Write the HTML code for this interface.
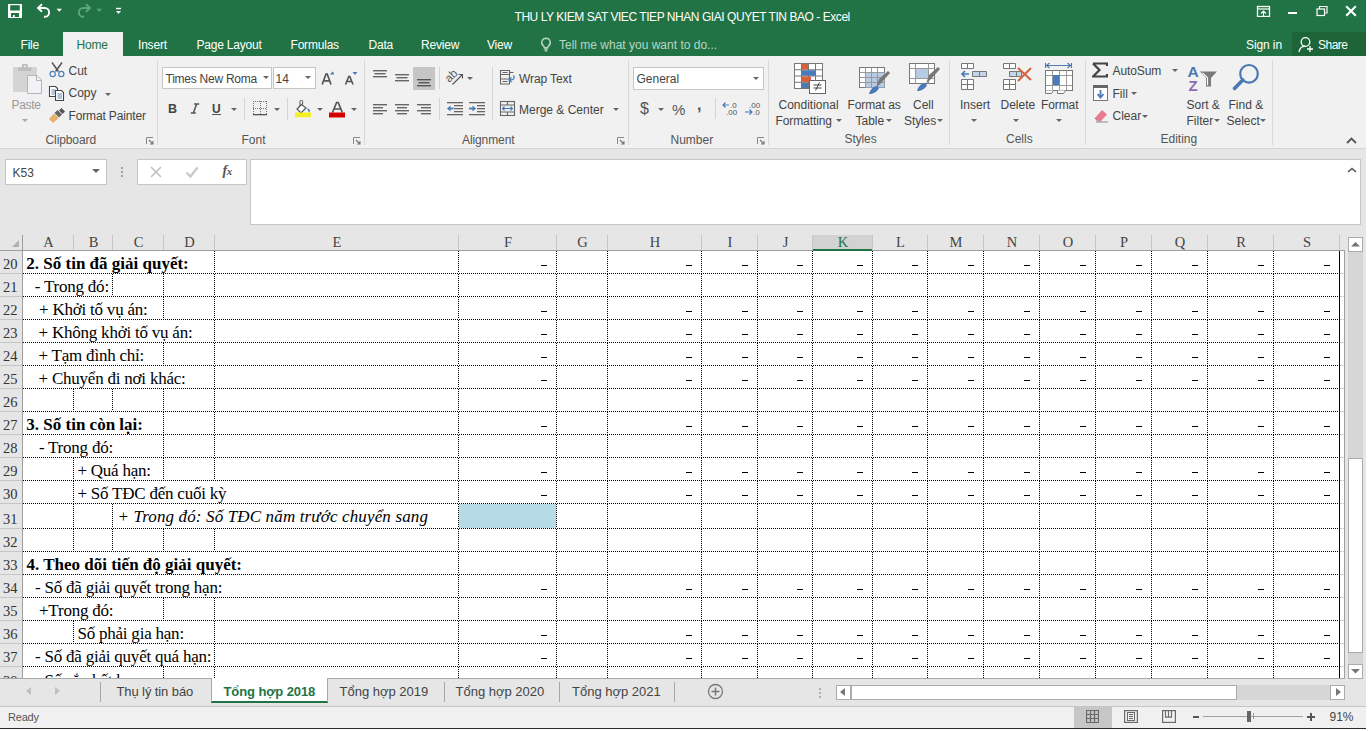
<!DOCTYPE html><html><head><meta charset="utf-8"><style>
html,body{margin:0;padding:0}
body{width:1371px;height:731px;position:relative;overflow:hidden;background:#fff}
body>div,body>svg{position:absolute}
.t{white-space:pre}
</style></head><body>
<div style="left:0px;top:0px;width:1366px;height:56px;background:#217346"></div>
<svg style="left:8px;top:4px;" width="14" height="14" viewBox="0 0 14 14"><rect x="0" y="0" width="14" height="14" fill="#fff"/><rect x="2.2" y="1.2" width="9.6" height="5.3" fill="#217346"/><rect x="3" y="9" width="8" height="4" fill="#217346"/><rect x="5" y="11" width="1.7" height="2" fill="#fff"/></svg>
<svg style="left:36px;top:3px;" width="16" height="15" viewBox="0 0 16 15"><path d="M2.5 5h6.2a4.4 4.4 0 0 1 0 8.8h-0.8" fill="none" stroke="#fff" stroke-width="1.9"/><path d="M6 1.2L2 5l4 3.8" fill="none" stroke="#fff" stroke-width="1.9"/></svg>
<svg style="left:56px;top:8px;" width="7" height="5" viewBox="0 0 7 5"><path d="M0.5 0.8h5.5l-2.75 3z" fill="#fff"/></svg>
<svg style="left:76px;top:3px;" width="16" height="15" viewBox="0 0 16 15"><path d="M13.5 5h-6.2a4.4 4.4 0 0 0 0 8.8h0.8" fill="none" stroke="#5ea67e" stroke-width="1.9"/><path d="M10 1.2L14 5l-4 3.8" fill="none" stroke="#5ea67e" stroke-width="1.9"/></svg>
<svg style="left:96px;top:8px;" width="7" height="5" viewBox="0 0 7 5"><path d="M0.5 0.8h5.5l-2.75 3z" fill="#5ea67e"/></svg>
<svg style="left:115px;top:7px;" width="8" height="8" viewBox="0 0 8 8"><rect x="1" y="0.8" width="5" height="1.4" fill="#fff"/><path d="M1 4h5l-2.5 3z" fill="#fff"/></svg>
<div class="t" style="left:514.5px;top:10.84px;font:normal normal 12px/1 'Liberation Sans', sans-serif;color:#fff;letter-spacing:-0.45px">THU LY KIEM SAT VIEC TIEP NHAN GIAI QUYET TIN BAO - Excel</div>
<svg style="left:1256px;top:5px;" width="15" height="12" viewBox="0 0 15 12"><rect x="1.5" y="1.5" width="12" height="10" fill="none" stroke="#fff" stroke-width="1.3"/><path d="M1.5 4h12" stroke="#fff" stroke-width="1.2"/><path d="M7.5 11.5v-5M5 8.5l2.5-2.5 2.5 2.5" fill="none" stroke="#fff" stroke-width="1.2"/></svg>
<div style="left:1288px;top:11.5px;width:9px;height:2.2px;background:#fff"></div>
<svg style="left:1316px;top:5px;" width="12" height="12" viewBox="0 0 12 12"><rect x="1" y="4" width="7.5" height="6.5" fill="none" stroke="#fff" stroke-width="1.2"/><path d="M3.5 4v-2.5h7.5v6.5h-2.5" fill="none" stroke="#fff" stroke-width="1.2"/></svg>
<svg style="left:1345px;top:5px;" width="12" height="12" viewBox="0 0 12 12"><path d="M1.2 1.2l9.6 9.6M10.8 1.2l-9.6 9.6" stroke="#fff" stroke-width="2.1"/></svg>
<div style="left:63px;top:32px;width:60px;height:24px;background:#f1f1f1"></div>
<div class="t" style="left:20.5px;top:38.84px;font:normal normal 12px/1 'Liberation Sans', sans-serif;color:#fff;letter-spacing:-0.2px">File</div>
<div class="t" style="left:76.5px;top:38.84px;font:normal normal 12px/1 'Liberation Sans', sans-serif;color:#217346;letter-spacing:-0.2px">Home</div>
<div class="t" style="left:138px;top:38.84px;font:normal normal 12px/1 'Liberation Sans', sans-serif;color:#fff;letter-spacing:-0.2px">Insert</div>
<div class="t" style="left:196.5px;top:38.84px;font:normal normal 12px/1 'Liberation Sans', sans-serif;color:#fff;letter-spacing:-0.2px">Page Layout</div>
<div class="t" style="left:290.5px;top:38.84px;font:normal normal 12px/1 'Liberation Sans', sans-serif;color:#fff;letter-spacing:-0.2px">Formulas</div>
<div class="t" style="left:368.5px;top:38.84px;font:normal normal 12px/1 'Liberation Sans', sans-serif;color:#fff;letter-spacing:-0.2px">Data</div>
<div class="t" style="left:421px;top:38.84px;font:normal normal 12px/1 'Liberation Sans', sans-serif;color:#fff;letter-spacing:-0.2px">Review</div>
<div class="t" style="left:487px;top:38.84px;font:normal normal 12px/1 'Liberation Sans', sans-serif;color:#fff;letter-spacing:-0.2px">View</div>
<svg style="left:540px;top:37px;" width="12" height="15" viewBox="0 0 12 15"><path d="M6 1.2a4.3 4.3 0 0 0-2.6 7.7c.6.5.9 1.1.9 1.8h3.4c0-.7.3-1.3.9-1.8A4.3 4.3 0 0 0 6 1.2z" fill="none" stroke="#b9d5c3" stroke-width="1.4"/><path d="M4.3 12h3.4M4.8 13.8h2.4" stroke="#b9d5c3" stroke-width="1.4"/></svg>
<div class="t" style="left:559px;top:38.84px;font:normal normal 12px/1 'Liberation Sans', sans-serif;color:#b9d5c3;letter-spacing:0px">Tell me what you want to do...</div>
<div class="t" style="left:1246px;top:38.84px;font:normal normal 12px/1 'Liberation Sans', sans-serif;color:#fff;letter-spacing:-0.1px">Sign in</div>
<div style="left:1292px;top:32px;width:74px;height:24px;background:#1d6538"></div>
<svg style="left:1298px;top:36px;" width="17" height="17" viewBox="0 0 17 17"><circle cx="7.5" cy="6" r="4.3" fill="none" stroke="#fff" stroke-width="1.3"/><path d="M1 16c.5-3.5 3-5.5 6-5.8" fill="none" stroke="#fff" stroke-width="1.3"/><path d="M12 10v6M9 13h6" stroke="#fff" stroke-width="1.3"/></svg>
<div class="t" style="left:1318px;top:38.84px;font:normal normal 12px/1 'Liberation Sans', sans-serif;color:#fff;letter-spacing:-0.5px">Share</div>
<div style="left:0px;top:56px;width:1366px;height:92px;background:#f1f1f1"></div>
<div style="left:0px;top:148px;width:1366px;height:1px;background:#d5d5d5"></div>
<svg style="left:12px;top:63px;" width="30" height="32" viewBox="0 0 30 32"><rect x="1" y="4" width="24" height="25" fill="#d4d4d4"/><rect x="6" y="4.5" width="13.5" height="3.5" fill="#bdbdbd"/><rect x="10" y="1" width="5.7" height="4" fill="#bdbdbd"/><circle cx="12.8" cy="3.3" r="1" fill="#eee"/><path d="M15.5 12.5h9.5l4.5 4.5v13.5h-14z" fill="#f3f1f6" stroke="#b4b4b4" stroke-width="1"/><path d="M24.5 12.5v5h5" fill="none" stroke="#b4b4b4"/></svg>
<div class="t" style="left:11.5px;top:99.34px;font:normal normal 12px/1 'Liberation Sans', sans-serif;color:#9a9a9a;letter-spacing:-0.3px">Paste</div>
<svg style="left:22px;top:119px;" width="6" height="4" viewBox="0 0 6 4"><path d="M0 0h6l-3 3z" fill="#aaa"/></svg>
<svg style="left:49px;top:62px;" width="16" height="16" viewBox="0 0 16 16"><path d="M3 .5l6.5 9M13 .5L6.5 9.5" stroke="#555" stroke-width="1.5"/><circle cx="3.7" cy="12" r="2.6" fill="none" stroke="#4a7ebb" stroke-width="1.2"/><circle cx="12.3" cy="12" r="2.6" fill="none" stroke="#4a7ebb" stroke-width="1.2"/></svg>
<div class="t" style="left:68.5px;top:64.84px;font:normal normal 12px/1 'Liberation Sans', sans-serif;color:#444;">Cut</div>
<svg style="left:48px;top:85px;" width="17" height="16" viewBox="0 0 17 16"><path d="M1.5 1.5h6l2 2v8h-8z" fill="#fff" stroke="#444" stroke-width="1.1"/><path d="M3.5 5h4M3.5 7h4M3.5 9h3" stroke="#4a7ebb" stroke-width=".9"/><path d="M7.5 5.5h6l2 2v8h-8z" fill="#fff" stroke="#444" stroke-width="1.1"/><path d="M9.5 9h4.5M9.5 11h4.5M9.5 13h4.5" stroke="#4a7ebb" stroke-width=".9"/></svg>
<div class="t" style="left:68.5px;top:87.34px;font:normal normal 12px/1 'Liberation Sans', sans-serif;color:#444;">Copy</div>
<svg style="left:105px;top:93px;" width="6" height="4" viewBox="0 0 6 4"><path d="M0 0h6l-3 3z" fill="#666"/></svg>
<svg style="left:48px;top:108px;" width="18" height="16" viewBox="0 0 18 16"><path d="M1 11l5-5.5 4.5 4.5-5.5 5z" fill="#e6b167"/><path d="M6.5 5l3-3 4.5 4.5-3 3z" fill="#666"/><path d="M11 2.5l2.5-2.5 3.5 3.5-2.5 2.5z" fill="#555"/></svg>
<div class="t" style="left:68.5px;top:110.34px;font:normal normal 12px/1 'Liberation Sans', sans-serif;color:#444;letter-spacing:-0.15px">Format Painter</div>
<div class="t" style="left:45.5px;top:133.84px;font:normal normal 12px/1 'Liberation Sans', sans-serif;color:#555;letter-spacing:-0.1px">Clipboard</div>
<svg style="left:146px;top:137px;" width="8" height="8" viewBox="0 0 8 8"><path d="M0.5 7V0.5H7" fill="none" stroke="#888" stroke-width="1"/><path d="M3 3l4 4M7 4v3H4" fill="none" stroke="#777" stroke-width="1.1"/></svg>
<div style="left:157px;top:60px;width:1px;height:85px;background:#d8d8d8"></div>
<div style="left:162px;top:67px;width:110px;height:22px;background:#fff;border:1px solid #c6c6c6;box-sizing:border-box"></div>
<div style="left:273px;top:67px;width:43px;height:22px;background:#fff;border:1px solid #c6c6c6;box-sizing:border-box"></div>
<div class="t" style="left:165.5px;top:72.84px;font:normal normal 12px/1 'Liberation Sans', sans-serif;color:#444;letter-spacing:-0.25px">Times New Roma</div>
<svg style="left:263px;top:76px;" width="6" height="4" viewBox="0 0 6 4"><path d="M0 0h6l-3 3z" fill="#666"/></svg>
<div class="t" style="left:275.5px;top:72.84px;font:normal normal 12px/1 'Liberation Sans', sans-serif;color:#444;">14</div>
<svg style="left:305px;top:76px;" width="6" height="4" viewBox="0 0 6 4"><path d="M0 0h6l-3 3z" fill="#666"/></svg>
<svg style="left:321px;top:71px;" width="13" height="14" viewBox="0 0 13 14"><path d="M1.2 13.5L5 3h1.2L10 13.5M2.6 9.8h5.8" fill="none" stroke="#555" stroke-width="1.7"/><path d="M9 3.5l2.5-3 2.5 3z" fill="#4a7ab8"/></svg>
<svg style="left:344px;top:71px;" width="13" height="14" viewBox="0 0 13 14"><path d="M1.5 13.5L4.8 5.5h1L9 13.5M2.8 10.5h4.8" fill="none" stroke="#555" stroke-width="1.6"/><path d="M8.5 1h5l-2.5 3z" fill="#4a7ab8"/></svg>
<div class="t" style="left:168px;top:102.92px;font:normal bold 12.5px/1 'Liberation Sans', sans-serif;color:#444;">B</div>
<svg style="left:190px;top:103px;" width="10" height="11" viewBox="0 0 10 11"><path d="M4.2 1h5M0.8 10h5M6.7 1L3.3 10" fill="none" stroke="#555" stroke-width="1.5"/></svg>
<div class="t" style="left:212px;top:102.84px;font:normal bold 12px/1 'Liberation Sans', sans-serif;color:#444;">U</div>
<div style="left:212px;top:114px;width:9px;height:1px;background:#555"></div>
<svg style="left:231px;top:108px;" width="6" height="4" viewBox="0 0 6 4"><path d="M0 0h6l-3 3z" fill="#666"/></svg>
<div style="left:244px;top:98px;width:1px;height:22px;background:#d4d4d4"></div>
<svg style="left:253px;top:101px;" width="14" height="15" viewBox="0 0 14 15"><path d="M0 .5h14M0 7.5h14M.5 0v14M7.5 0v14M13.5 0v14" stroke="#777" stroke-width="1" stroke-dasharray="1 1"/><rect x="0" y="13" width="14" height="1.3" fill="#555"/></svg>
<svg style="left:274px;top:108px;" width="6" height="4" viewBox="0 0 6 4"><path d="M0 0h6l-3 3z" fill="#666"/></svg>
<div style="left:287px;top:98px;width:1px;height:22px;background:#d4d4d4"></div>
<svg style="left:294px;top:100px;" width="19" height="18" viewBox="0 0 19 18"><path d="M7.5 4.5l-4.5 4.5 4 4 5-5z" fill="#fff" stroke="#555" stroke-width="1.2"/><path d="M6 6v-4.5a1.3 1.3 0 0 1 2.6 0v3" fill="none" stroke="#555" stroke-width="1"/><path d="M13 8.5c1.5-.2 3 .8 3 2.5l-1 1.5z" fill="#4a7ab8"/><rect x="1" y="12.5" width="16" height="4.7" fill="#f2ef22"/></svg>
<svg style="left:317px;top:108px;" width="6" height="4" viewBox="0 0 6 4"><path d="M0 0h6l-3 3z" fill="#666"/></svg>
<svg style="left:329px;top:101px;" width="17" height="17" viewBox="0 0 17 17"><path d="M3.5 11.5L7.6 1.5h1.6L13.3 11.5M5.2 8h6.4" fill="none" stroke="#555" stroke-width="1.7"/><rect x="0" y="11.5" width="16" height="5" fill="#d40000"/></svg>
<svg style="left:351px;top:108px;" width="6" height="4" viewBox="0 0 6 4"><path d="M0 0h6l-3 3z" fill="#666"/></svg>
<div class="t" style="left:241.5px;top:133.84px;font:normal normal 12px/1 'Liberation Sans', sans-serif;color:#555;">Font</div>
<svg style="left:353px;top:137px;" width="8" height="8" viewBox="0 0 8 8"><path d="M0.5 7V0.5H7" fill="none" stroke="#888" stroke-width="1"/><path d="M3 3l4 4M7 4v3H4" fill="none" stroke="#777" stroke-width="1.1"/></svg>
<div style="left:364px;top:60px;width:1px;height:85px;background:#d8d8d8"></div>
<svg style="left:373px;top:69px;" width="20" height="20" viewBox="0 0 20 20"><rect x="0" y="1" width="14" height="1.4" fill="#666"/><rect x="1.5" y="4" width="11" height="1.4" fill="#666"/><rect x="0" y="7" width="14" height="1.4" fill="#666"/></svg>
<svg style="left:395px;top:73px;" width="20" height="20" viewBox="0 0 20 20"><rect x="0" y="1" width="14" height="1.4" fill="#666"/><rect x="1.5" y="4" width="11" height="1.4" fill="#666"/><rect x="0" y="7" width="14" height="1.4" fill="#666"/></svg>
<div style="left:413px;top:67px;width:22px;height:23px;background:#c6c6c6"></div>
<svg style="left:417px;top:78px;" width="20" height="20" viewBox="0 0 20 20"><rect x="0" y="1" width="14" height="1.4" fill="#555"/><rect x="1.5" y="4" width="11" height="1.4" fill="#555"/><rect x="0" y="7" width="14" height="1.4" fill="#555"/></svg>
<div style="left:439px;top:67px;width:1px;height:22px;background:#d4d4d4"></div>
<svg style="left:446px;top:68px;" width="20" height="18" viewBox="0 0 20 18"><g transform="rotate(-45 6 8)"><text x="-1" y="11" font-family="Liberation Sans" font-size="11.5" fill="#555">ab</text></g><path d="M6.5 16.5L16 7" stroke="#555" stroke-width="1.1"/><path d="M12.5 6.5h4v4" fill="none" stroke="#555" stroke-width="1.1"/></svg>
<svg style="left:467px;top:77px;" width="6" height="4" viewBox="0 0 6 4"><path d="M0 0h6l-3 3z" fill="#666"/></svg>
<svg style="left:373px;top:103px;" width="20" height="20" viewBox="0 0 20 20"><rect x="0" y="1" width="14" height="1.4" fill="#666"/><rect x="0" y="4" width="10" height="1.4" fill="#666"/><rect x="0" y="7" width="14" height="1.4" fill="#666"/><rect x="0" y="10" width="10" height="1.4" fill="#666"/></svg>
<svg style="left:395px;top:103px;" width="20" height="20" viewBox="0 0 20 20"><rect x="0" y="1" width="14" height="1.4" fill="#666"/><rect x="2" y="4" width="10" height="1.4" fill="#666"/><rect x="0" y="7" width="14" height="1.4" fill="#666"/><rect x="2" y="10" width="10" height="1.4" fill="#666"/></svg>
<svg style="left:417px;top:103px;" width="20" height="20" viewBox="0 0 20 20"><rect x="0" y="1" width="14" height="1.4" fill="#666"/><rect x="4" y="4" width="10" height="1.4" fill="#666"/><rect x="0" y="7" width="14" height="1.4" fill="#666"/><rect x="4" y="10" width="10" height="1.4" fill="#666"/></svg>
<div style="left:439px;top:98px;width:1px;height:22px;background:#d4d4d4"></div>
<svg style="left:446px;top:101px;" width="17" height="15" viewBox="0 0 17 15"><rect x="1" y="1" width="16" height="1.3" fill="#666"/><rect x="8" y="4" width="9" height="1.3" fill="#666"/><rect x="8" y="7" width="9" height="1.3" fill="#666"/><rect x="8" y="10" width="9" height="1.3" fill="#666"/><rect x="1" y="13" width="16" height="1.3" fill="#666"/><path d="M1 7.5l3.5-3v6z" fill="#4a7ab8"/><rect x="3" y="6.6" width="4.5" height="1.8" fill="#4a7ab8"/></svg>
<svg style="left:468px;top:101px;" width="17" height="15" viewBox="0 0 17 15"><rect x="1" y="1" width="16" height="1.3" fill="#666"/><rect x="9" y="4" width="8" height="1.3" fill="#666"/><rect x="9" y="7" width="8" height="1.3" fill="#666"/><rect x="9" y="10" width="8" height="1.3" fill="#666"/><rect x="1" y="13" width="16" height="1.3" fill="#666"/><path d="M8 7.5l-3.5-3v6z" fill="#4a7ab8"/><rect x="1" y="6.6" width="4.5" height="1.8" fill="#4a7ab8"/></svg>
<div style="left:492px;top:67px;width:1px;height:53px;background:#d4d4d4"></div>
<svg style="left:499px;top:69px;" width="18" height="17" viewBox="0 0 18 17"><path d="M1.5 1.5h9v4h-9zM1.5 5.5h9v4.5h-9zM1.5 10h9v5h-9z" fill="none" stroke="#666" stroke-width="1.1"/><path d="M3.5 3.5h5M3.5 12.5h5" stroke="#666" stroke-width="1"/><path d="M10.5 3.5h4" stroke="#666" stroke-width="1.1"/><path d="M14.5 6.5c1.5 1.5.5 4.5-2.5 4.5h-1.5" fill="none" stroke="#4a7ab8" stroke-width="1.3"/><path d="M12.5 8.5l-2.5 2.5 2.5 2.3" fill="none" stroke="#4a7ab8" stroke-width="1.2"/></svg>
<div class="t" style="left:519px;top:73.34px;font:normal normal 12px/1 'Liberation Sans', sans-serif;color:#444;letter-spacing:-0.1px">Wrap Text</div>
<svg style="left:499px;top:100px;" width="17" height="17" viewBox="0 0 17 17"><rect x="1.5" y="1.5" width="14" height="14" fill="none" stroke="#666" stroke-width="1.1"/><path d="M1.5 5h14M1.5 12h14M8.5 1.5v3.5M8.5 12v3.5" stroke="#666" stroke-width="1.1"/><path d="M3.5 8.5h10" stroke="#4a7ab8" stroke-width="1.1"/><path d="M5.5 6.5l-2 2 2 2M11.5 6.5l2 2-2 2" fill="none" stroke="#4a7ab8" stroke-width="1.1"/></svg>
<div class="t" style="left:519px;top:103.84px;font:normal normal 12px/1 'Liberation Sans', sans-serif;color:#444;letter-spacing:0px">Merge &amp; Center</div>
<svg style="left:613px;top:108px;" width="6" height="4" viewBox="0 0 6 4"><path d="M0 0h6l-3 3z" fill="#666"/></svg>
<div class="t" style="left:462px;top:133.84px;font:normal normal 12px/1 'Liberation Sans', sans-serif;color:#555;letter-spacing:-0.1px">Alignment</div>
<svg style="left:617px;top:137px;" width="8" height="8" viewBox="0 0 8 8"><path d="M0.5 7V0.5H7" fill="none" stroke="#888" stroke-width="1"/><path d="M3 3l4 4M7 4v3H4" fill="none" stroke="#777" stroke-width="1.1"/></svg>
<div style="left:628px;top:60px;width:1px;height:85px;background:#d8d8d8"></div>
<div style="left:633px;top:67px;width:131px;height:23px;background:#fff;border:1px solid #c6c6c6;box-sizing:border-box"></div>
<div class="t" style="left:636.5px;top:72.84px;font:normal normal 12px/1 'Liberation Sans', sans-serif;color:#444;">General</div>
<svg style="left:753px;top:77px;" width="6" height="4" viewBox="0 0 6 4"><path d="M0 0h6l-3 3z" fill="#666"/></svg>
<div class="t" style="left:640px;top:101.46px;font:normal normal 16px/1 'Liberation Sans', sans-serif;color:#555;">$</div>
<svg style="left:658px;top:108px;" width="6" height="4" viewBox="0 0 6 4"><path d="M0 0h6l-3 3z" fill="#666"/></svg>
<div class="t" style="left:672px;top:102.30px;font:normal normal 15px/1 'Liberation Sans', sans-serif;color:#555;">%</div>
<div class="t" style="left:697px;top:97.46px;font:normal bold 16px/1 'Liberation Sans', sans-serif;color:#555;">,</div>
<div style="left:715px;top:98px;width:1px;height:21px;background:#d4d4d4"></div>
<svg style="left:722px;top:101px;" width="17" height="15" viewBox="0 0 17 15"><text x="8" y="7" font-family="Liberation Sans" font-size="8" fill="#555">.0</text><text x="4" y="14" font-family="Liberation Sans" font-size="8" fill="#555">.00</text><path d="M1 4h6M3.5 1.5L1 4l2.5 2.5" fill="none" stroke="#4a7ab8" stroke-width="1.2"/></svg>
<svg style="left:744px;top:101px;" width="17" height="15" viewBox="0 0 17 15"><text x="5" y="7" font-family="Liberation Sans" font-size="8" fill="#555">.00</text><text x="9" y="14" font-family="Liberation Sans" font-size="8" fill="#555">.0</text><path d="M1 11h7M5.5 8.5L8 11l-2.5 2.5" fill="none" stroke="#4a7ab8" stroke-width="1.2"/></svg>
<div class="t" style="left:670.5px;top:133.84px;font:normal normal 12px/1 'Liberation Sans', sans-serif;color:#555;">Number</div>
<svg style="left:757px;top:137px;" width="8" height="8" viewBox="0 0 8 8"><path d="M0.5 7V0.5H7" fill="none" stroke="#888" stroke-width="1"/><path d="M3 3l4 4M7 4v3H4" fill="none" stroke="#777" stroke-width="1.1"/></svg>
<div style="left:768px;top:60px;width:1px;height:85px;background:#d8d8d8"></div>
<svg style="left:794px;top:63px;" width="32" height="32" viewBox="0 0 32 32"><rect x=".5" y=".5" width="28" height="25" fill="#fff" stroke="#777"/><path d="M.5 6.75h28M.5 13h28M.5 19.25h28M7.5 .5v25M14.5 .5v25M21.5 .5v25" stroke="#777" stroke-width="1"/><rect x="8" y="1" width="6" height="5.5" fill="#d8603a"/><rect x="8" y="7.25" width="13" height="5.5" fill="#4a7ab8"/><rect x="8" y="13.5" width="9" height="5.5" fill="#d8603a"/><rect x="8" y="19.75" width="6" height="5.5" fill="#4a7ab8"/><rect x="15.5" y="17.5" width="16" height="13" fill="#fff" stroke="#666"/><path d="M19.5 22h8M19.5 25h8M25.5 19.5l-4 8" stroke="#444" stroke-width="1"/></svg>
<div class="t" style="left:778.5px;top:99.34px;font:normal normal 12px/1 'Liberation Sans', sans-serif;color:#444;">Conditional</div>
<div class="t" style="left:775.5px;top:115.14px;font:normal normal 12px/1 'Liberation Sans', sans-serif;color:#444;letter-spacing:-0.1px">Formatting</div>
<svg style="left:836px;top:119px;" width="6" height="4" viewBox="0 0 6 4"><path d="M0 0h6l-3 3z" fill="#666"/></svg>
<svg style="left:859px;top:65px;" width="32" height="30" viewBox="0 0 32 30"><rect x=".5" y="2.5" width="25" height="20" fill="#fff" stroke="#777"/><rect x="6.5" y="7.5" width="19" height="15" fill="#b7cce4"/><path d="M.5 7.5h25M.5 12.5h25M.5 17.5h25M6.5 2.5v20M12.5 2.5v20M18.5 2.5v20" stroke="#999" stroke-width="1"/><path d="M17 23l6-6 8-9-2-2-9 8z" fill="#777"/><path d="M10 29c1-4 4-8 8-8l2 2c-2 4-6 6-10 6z" fill="#4a7ab8"/></svg>
<div class="t" style="left:847.5px;top:99.34px;font:normal normal 12px/1 'Liberation Sans', sans-serif;color:#444;letter-spacing:-0.1px">Format as</div>
<div class="t" style="left:855.5px;top:115.14px;font:normal normal 12px/1 'Liberation Sans', sans-serif;color:#444;">Table</div>
<svg style="left:886px;top:119px;" width="6" height="4" viewBox="0 0 6 4"><path d="M0 0h6l-3 3z" fill="#666"/></svg>
<svg style="left:909px;top:63px;" width="32" height="30" viewBox="0 0 32 30"><rect x=".5" y=".5" width="25" height="20" fill="#fff" stroke="#777"/><rect x="6.5" y="5.5" width="13" height="10" fill="#b7cce4"/><path d="M.5 5.5h25M.5 15.5h25M6.5 .5v20M19.5 .5v20" stroke="#999" stroke-width="1"/><path d="M17 21l6-6 8-9-2-2-9 8z" fill="#777"/><path d="M8 28c1-4 4-8 8-8l2 2c-2 4-6 6-10 6z" fill="#4a7ab8"/></svg>
<div class="t" style="left:913px;top:99.34px;font:normal normal 12px/1 'Liberation Sans', sans-serif;color:#444;">Cell</div>
<div class="t" style="left:904px;top:115.14px;font:normal normal 12px/1 'Liberation Sans', sans-serif;color:#444;letter-spacing:-0.1px">Styles</div>
<svg style="left:937px;top:119px;" width="6" height="4" viewBox="0 0 6 4"><path d="M0 0h6l-3 3z" fill="#666"/></svg>
<div class="t" style="left:844.5px;top:133.34px;font:normal normal 12px/1 'Liberation Sans', sans-serif;color:#555;letter-spacing:-0.1px">Styles</div>
<div style="left:949px;top:60px;width:1px;height:85px;background:#d8d8d8"></div>
<svg style="left:961px;top:63px;" width="28" height="29" viewBox="0 0 28 29"><path d="M.5 .5h6v5h-6zM6.5 .5h6v5h-6z" fill="#fff" stroke="#777"/><path d="M11.5 8.5h7v5h-7zM18.5 8.5h7v5h-7z" fill="#c5d6ea" stroke="#777"/><path d="M1 11h7M4 8l-3 3 3 3" fill="none" stroke="#4a7ab8" stroke-width="1.6"/><path d="M.5 16.5h6v5h-6zM6.5 16.5h6v5h-6zM.5 21.5h6v5h-6zM6.5 21.5h6v5h-6z" fill="#fff" stroke="#777"/></svg>
<div class="t" style="left:960px;top:99.34px;font:normal normal 12px/1 'Liberation Sans', sans-serif;color:#444;">Insert</div>
<svg style="left:971px;top:119px;" width="6" height="4" viewBox="0 0 6 4"><path d="M0 0h6l-3 3z" fill="#666"/></svg>
<svg style="left:1003px;top:63px;" width="30" height="29" viewBox="0 0 30 29"><path d="M.5 .5h6v5h-6zM6.5 .5h6v5h-6z" fill="#fff" stroke="#777"/><path d="M6.5 8.5h7v5h-7zM13.5 8.5h5v5h-5z" fill="#c5d6ea" stroke="#777"/><path d="M.5 16.5h6v5h-6zM6.5 16.5h6v5h-6zM.5 21.5h6v5h-6zM6.5 21.5h6v5h-6z" fill="#fff" stroke="#777"/><path d="M15 5l13 12M28 5l-13 13" stroke="#d8603a" stroke-width="2"/></svg>
<div class="t" style="left:1000.5px;top:99.34px;font:normal normal 12px/1 'Liberation Sans', sans-serif;color:#444;">Delete</div>
<svg style="left:1013px;top:119px;" width="6" height="4" viewBox="0 0 6 4"><path d="M0 0h6l-3 3z" fill="#666"/></svg>
<svg style="left:1044px;top:62px;" width="30" height="32" viewBox="0 0 30 32"><path d="M1.5 1v5M27.5 1v5M2.5 3.5h24M5.5 1l-3 2.5 3 2.5M23.5 1l3 2.5-3 2.5" fill="none" stroke="#4a7ab8" stroke-width="1.1"/><rect x="1.5" y="8.5" width="27" height="20" fill="#fff" stroke="#777"/><path d="M1.5 13.5h27M1.5 23.5h27M8.5 8.5v20M15.5 8.5v20M22.5 8.5v20" stroke="#999"/><rect x="9" y="13" width="6.5" height="10" fill="#4a7ab8"/><path d="M1.5 28.5v3h6l2-3h4v3h6l2-3" fill="#fff" stroke="#777"/></svg>
<div class="t" style="left:1041px;top:99.34px;font:normal normal 12px/1 'Liberation Sans', sans-serif;color:#444;letter-spacing:-0.1px">Format</div>
<svg style="left:1056px;top:119px;" width="6" height="4" viewBox="0 0 6 4"><path d="M0 0h6l-3 3z" fill="#666"/></svg>
<div class="t" style="left:1006px;top:133.34px;font:normal normal 12px/1 'Liberation Sans', sans-serif;color:#555;">Cells</div>
<div style="left:1085px;top:60px;width:1px;height:85px;background:#d8d8d8"></div>
<svg style="left:1092px;top:62px;" width="16" height="16" viewBox="0 0 16 16"><path d="M1 1.5h14v2.5M1 1.5l6.5 6.5L1 14.5h14v-2.5" fill="none" stroke="#444" stroke-width="2.2"/></svg>
<div class="t" style="left:1112.5px;top:64.84px;font:normal normal 12px/1 'Liberation Sans', sans-serif;color:#444;letter-spacing:-0.1px">AutoSum</div>
<svg style="left:1172px;top:69px;" width="6" height="4" viewBox="0 0 6 4"><path d="M0 0h6l-3 3z" fill="#666"/></svg>
<svg style="left:1093px;top:85px;" width="16" height="16" viewBox="0 0 16 16"><rect x=".5" y=".5" width="14" height="15" fill="#fff" stroke="#777"/><rect x="0" y="0" width="15" height="3" fill="#666"/><path d="M7.5 5v7M4.5 9l3 3.5 3-3.5" fill="none" stroke="#4a7ab8" stroke-width="1.8"/></svg>
<div class="t" style="left:1112.5px;top:87.84px;font:normal normal 12px/1 'Liberation Sans', sans-serif;color:#444;">Fill</div>
<svg style="left:1131px;top:92px;" width="6" height="4" viewBox="0 0 6 4"><path d="M0 0h6l-3 3z" fill="#666"/></svg>
<svg style="left:1093px;top:108px;" width="16" height="15" viewBox="0 0 16 15"><path d="M2 10l7-8 5 4.5-7 7.5z" fill="#e77b92"/><path d="M2 10l3 3.5" stroke="#c05070" stroke-width="1"/><path d="M3 14h12" stroke="#888" stroke-width="1"/></svg>
<div class="t" style="left:1112.5px;top:110.34px;font:normal normal 12px/1 'Liberation Sans', sans-serif;color:#444;">Clear</div>
<svg style="left:1142px;top:115px;" width="6" height="4" viewBox="0 0 6 4"><path d="M0 0h6l-3 3z" fill="#666"/></svg>
<svg style="left:1186px;top:63px;" width="34" height="30" viewBox="0 0 34 30"><text x="1.5" y="13.5" font-family="Liberation Sans" font-weight="bold" font-size="15.5" fill="#4a78b0">A</text><text x="2.5" y="28" font-family="Liberation Sans" font-weight="bold" font-size="15" fill="#8e6bb5">Z</text><path d="M14 8.5h17l-6 6.5v8.5h-5v-8.5z" fill="#7a7a7a"/><path d="M16.5 9.8l5 5v7.5" fill="none" stroke="#fff" stroke-width="1.2"/></svg>
<div class="t" style="left:1186.5px;top:99.34px;font:normal normal 12px/1 'Liberation Sans', sans-serif;color:#444;">Sort &amp;</div>
<div class="t" style="left:1186.5px;top:115.14px;font:normal normal 12px/1 'Liberation Sans', sans-serif;color:#444;">Filter</div>
<svg style="left:1214px;top:119px;" width="6" height="4" viewBox="0 0 6 4"><path d="M0 0h6l-3 3z" fill="#666"/></svg>
<svg style="left:1230px;top:63px;" width="31" height="29" viewBox="0 0 31 29"><circle cx="19" cy="10.8" r="8.8" fill="none" stroke="#4a78b0" stroke-width="2.2"/><path d="M12.8 17L4.5 25.5" stroke="#4a78b0" stroke-width="3.6" stroke-linecap="round"/></svg>
<div class="t" style="left:1228.5px;top:99.34px;font:normal normal 12px/1 'Liberation Sans', sans-serif;color:#444;">Find &amp;</div>
<div class="t" style="left:1226.5px;top:115.14px;font:normal normal 12px/1 'Liberation Sans', sans-serif;color:#444;">Select</div>
<svg style="left:1260px;top:119px;" width="6" height="4" viewBox="0 0 6 4"><path d="M0 0h6l-3 3z" fill="#666"/></svg>
<div class="t" style="left:1160.5px;top:133.34px;font:normal normal 12px/1 'Liberation Sans', sans-serif;color:#555;">Editing</div>
<div style="left:1272px;top:60px;width:1px;height:85px;background:#d8d8d8"></div>
<svg style="left:1346px;top:137px;" width="11" height="7" viewBox="0 0 11 7"><path d="M1 6l4.5-4.5L10 6" fill="none" stroke="#555" stroke-width="1.8"/></svg>
<div style="left:0px;top:149px;width:1366px;height:86px;background:#e6e6e6"></div>
<div style="left:5px;top:159px;width:102px;height:26px;background:#fff;border:1px solid #c6c6c6;box-sizing:border-box"></div>
<div class="t" style="left:12.5px;top:166.84px;font:normal normal 12px/1 'Liberation Sans', sans-serif;color:#444;">K53</div>
<svg style="left:92px;top:169px;" width="8" height="5" viewBox="0 0 8 5"><path d="M0 0h8l-4 4z" fill="#666"/></svg>
<div style="left:121px;top:167px;width:2px;height:2px;background:#a0a0a0"></div>
<div style="left:121px;top:171px;width:2px;height:2px;background:#a0a0a0"></div>
<div style="left:121px;top:175px;width:2px;height:2px;background:#a0a0a0"></div>
<div style="left:137px;top:159px;width:110px;height:26px;background:#fff;border:1px solid #c6c6c6;box-sizing:border-box"></div>
<svg style="left:150px;top:166px;" width="12" height="12" viewBox="0 0 12 12"><path d="M1 1l10 10M11 1L1 11" stroke="#c2c2c2" stroke-width="1.7"/></svg>
<svg style="left:185px;top:166px;" width="14" height="12" viewBox="0 0 14 12"><path d="M1.5 6.5l4 4L12.5 1.5" fill="none" stroke="#c8c8c8" stroke-width="2.3"/></svg>
<div class="t" style="left:222.5px;top:163.78px;font:italic bold 14px/1 'Liberation Serif', serif;color:#555;letter-spacing:-0.5px">f<span style="font-size:11px">x</span></div>
<div style="left:250px;top:159px;width:1111px;height:66px;background:#fff;border:1px solid #c6c6c6;box-sizing:border-box"></div>
<svg style="left:1347px;top:167px;" width="10" height="6" viewBox="0 0 10 6"><path d="M1 5l4-3.5L9 5" fill="none" stroke="#555" stroke-width="1.6"/></svg>
<div style="left:0px;top:235px;width:1345px;height:15px;background:#e6e6e6"></div>
<div style="left:0px;top:250px;width:22px;height:428px;background:#e6e6e6"></div>
<svg style="left:12px;top:240px;" width="8" height="8" viewBox="0 0 8 8"><path d="M7 0v7H0z" fill="#b0b0b0"/></svg>
<div style="left:22px;top:235px;width:1px;height:443px;background:#9e9e9e"></div>
<div style="left:0px;top:250px;width:1345px;height:1px;background:#9e9e9e"></div>
<div style="left:813px;top:235px;width:59px;height:15px;background:#d2d2d2"></div>
<div style="left:813px;top:249px;width:59px;height:2px;background:#217346"></div>
<div style="left:73px;top:235px;width:1px;height:15px;background:#c6c6c6"></div>
<div class="t" style="left:-251.5px;width:600px;text-align:center;top:234.86px;font:normal normal 14.5px/1 'Liberation Serif', serif;color:#444;">A</div>
<div style="left:112px;top:235px;width:1px;height:15px;background:#c6c6c6"></div>
<div class="t" style="left:-206.5px;width:600px;text-align:center;top:234.86px;font:normal normal 14.5px/1 'Liberation Serif', serif;color:#444;">B</div>
<div style="left:163px;top:235px;width:1px;height:15px;background:#c6c6c6"></div>
<div class="t" style="left:-161.5px;width:600px;text-align:center;top:234.86px;font:normal normal 14.5px/1 'Liberation Serif', serif;color:#444;">C</div>
<div style="left:214px;top:235px;width:1px;height:15px;background:#c6c6c6"></div>
<div class="t" style="left:-110.5px;width:600px;text-align:center;top:234.86px;font:normal normal 14.5px/1 'Liberation Serif', serif;color:#444;">D</div>
<div style="left:458px;top:235px;width:1px;height:15px;background:#c6c6c6"></div>
<div class="t" style="left:37.0px;width:600px;text-align:center;top:234.86px;font:normal normal 14.5px/1 'Liberation Serif', serif;color:#444;">E</div>
<div style="left:556px;top:235px;width:1px;height:15px;background:#c6c6c6"></div>
<div class="t" style="left:208.0px;width:600px;text-align:center;top:234.86px;font:normal normal 14.5px/1 'Liberation Serif', serif;color:#444;">F</div>
<div style="left:607px;top:235px;width:1px;height:15px;background:#c6c6c6"></div>
<div class="t" style="left:282.5px;width:600px;text-align:center;top:234.86px;font:normal normal 14.5px/1 'Liberation Serif', serif;color:#444;">G</div>
<div style="left:701px;top:235px;width:1px;height:15px;background:#c6c6c6"></div>
<div class="t" style="left:355.0px;width:600px;text-align:center;top:234.86px;font:normal normal 14.5px/1 'Liberation Serif', serif;color:#444;">H</div>
<div style="left:757px;top:235px;width:1px;height:15px;background:#c6c6c6"></div>
<div class="t" style="left:430.0px;width:600px;text-align:center;top:234.86px;font:normal normal 14.5px/1 'Liberation Serif', serif;color:#444;">I</div>
<div style="left:812px;top:235px;width:1px;height:15px;background:#c6c6c6"></div>
<div class="t" style="left:485.5px;width:600px;text-align:center;top:234.86px;font:normal normal 14.5px/1 'Liberation Serif', serif;color:#444;">J</div>
<div style="left:872px;top:235px;width:1px;height:15px;background:#c6c6c6"></div>
<div class="t" style="left:543.0px;width:600px;text-align:center;top:234.86px;font:normal normal 14.5px/1 'Liberation Serif', serif;color:#217346;">K</div>
<div style="left:927px;top:235px;width:1px;height:15px;background:#c6c6c6"></div>
<div class="t" style="left:600.5px;width:600px;text-align:center;top:234.86px;font:normal normal 14.5px/1 'Liberation Serif', serif;color:#444;">L</div>
<div style="left:983px;top:235px;width:1px;height:15px;background:#c6c6c6"></div>
<div class="t" style="left:656.0px;width:600px;text-align:center;top:234.86px;font:normal normal 14.5px/1 'Liberation Serif', serif;color:#444;">M</div>
<div style="left:1039px;top:235px;width:1px;height:15px;background:#c6c6c6"></div>
<div class="t" style="left:712.0px;width:600px;text-align:center;top:234.86px;font:normal normal 14.5px/1 'Liberation Serif', serif;color:#444;">N</div>
<div style="left:1095px;top:235px;width:1px;height:15px;background:#c6c6c6"></div>
<div class="t" style="left:768.0px;width:600px;text-align:center;top:234.86px;font:normal normal 14.5px/1 'Liberation Serif', serif;color:#444;">O</div>
<div style="left:1151px;top:235px;width:1px;height:15px;background:#c6c6c6"></div>
<div class="t" style="left:824.0px;width:600px;text-align:center;top:234.86px;font:normal normal 14.5px/1 'Liberation Serif', serif;color:#444;">P</div>
<div style="left:1207px;top:235px;width:1px;height:15px;background:#c6c6c6"></div>
<div class="t" style="left:880.0px;width:600px;text-align:center;top:234.86px;font:normal normal 14.5px/1 'Liberation Serif', serif;color:#444;">Q</div>
<div style="left:1273px;top:235px;width:1px;height:15px;background:#c6c6c6"></div>
<div class="t" style="left:941.0px;width:600px;text-align:center;top:234.86px;font:normal normal 14.5px/1 'Liberation Serif', serif;color:#444;">R</div>
<div style="left:1339px;top:235px;width:1px;height:15px;background:#c6c6c6"></div>
<div class="t" style="left:1007.0px;width:600px;text-align:center;top:234.86px;font:normal normal 14.5px/1 'Liberation Serif', serif;color:#444;">S</div>
<div style="left:23px;top:251px;width:1322px;height:427px;background:#fff"></div>
<div style="left:0px;top:273px;width:22px;height:1px;background:#c6c6c6"></div>
<div class="t" style="right:1353.5px;top:256.86px;font:normal normal 14.5px/1 'Liberation Serif', serif;color:#333;">20</div>
<div style="left:0px;top:296px;width:22px;height:1px;background:#c6c6c6"></div>
<div class="t" style="right:1353.5px;top:279.86px;font:normal normal 14.5px/1 'Liberation Serif', serif;color:#333;">21</div>
<div style="left:0px;top:319px;width:22px;height:1px;background:#c6c6c6"></div>
<div class="t" style="right:1353.5px;top:302.86px;font:normal normal 14.5px/1 'Liberation Serif', serif;color:#333;">22</div>
<div style="left:0px;top:342px;width:22px;height:1px;background:#c6c6c6"></div>
<div class="t" style="right:1353.5px;top:325.86px;font:normal normal 14.5px/1 'Liberation Serif', serif;color:#333;">23</div>
<div style="left:0px;top:365px;width:22px;height:1px;background:#c6c6c6"></div>
<div class="t" style="right:1353.5px;top:348.86px;font:normal normal 14.5px/1 'Liberation Serif', serif;color:#333;">24</div>
<div style="left:0px;top:388px;width:22px;height:1px;background:#c6c6c6"></div>
<div class="t" style="right:1353.5px;top:371.86px;font:normal normal 14.5px/1 'Liberation Serif', serif;color:#333;">25</div>
<div style="left:0px;top:411px;width:22px;height:1px;background:#c6c6c6"></div>
<div class="t" style="right:1353.5px;top:394.86px;font:normal normal 14.5px/1 'Liberation Serif', serif;color:#333;">26</div>
<div style="left:0px;top:434px;width:22px;height:1px;background:#c6c6c6"></div>
<div class="t" style="right:1353.5px;top:417.86px;font:normal normal 14.5px/1 'Liberation Serif', serif;color:#333;">27</div>
<div style="left:0px;top:457px;width:22px;height:1px;background:#c6c6c6"></div>
<div class="t" style="right:1353.5px;top:440.86px;font:normal normal 14.5px/1 'Liberation Serif', serif;color:#333;">28</div>
<div style="left:0px;top:480px;width:22px;height:1px;background:#c6c6c6"></div>
<div class="t" style="right:1353.5px;top:463.86px;font:normal normal 14.5px/1 'Liberation Serif', serif;color:#333;">29</div>
<div style="left:0px;top:503px;width:22px;height:1px;background:#c6c6c6"></div>
<div class="t" style="right:1353.5px;top:486.86px;font:normal normal 14.5px/1 'Liberation Serif', serif;color:#333;">30</div>
<div style="left:0px;top:528px;width:22px;height:1px;background:#c6c6c6"></div>
<div class="t" style="right:1353.5px;top:511.86px;font:normal normal 14.5px/1 'Liberation Serif', serif;color:#333;">31</div>
<div style="left:0px;top:551px;width:22px;height:1px;background:#c6c6c6"></div>
<div class="t" style="right:1353.5px;top:534.86px;font:normal normal 14.5px/1 'Liberation Serif', serif;color:#333;">32</div>
<div style="left:0px;top:574px;width:22px;height:1px;background:#c6c6c6"></div>
<div class="t" style="right:1353.5px;top:557.86px;font:normal normal 14.5px/1 'Liberation Serif', serif;color:#333;">33</div>
<div style="left:0px;top:597px;width:22px;height:1px;background:#c6c6c6"></div>
<div class="t" style="right:1353.5px;top:580.86px;font:normal normal 14.5px/1 'Liberation Serif', serif;color:#333;">34</div>
<div style="left:0px;top:620px;width:22px;height:1px;background:#c6c6c6"></div>
<div class="t" style="right:1353.5px;top:603.86px;font:normal normal 14.5px/1 'Liberation Serif', serif;color:#333;">35</div>
<div style="left:0px;top:643px;width:22px;height:1px;background:#c6c6c6"></div>
<div class="t" style="right:1353.5px;top:626.86px;font:normal normal 14.5px/1 'Liberation Serif', serif;color:#333;">36</div>
<div style="left:0px;top:666px;width:22px;height:1px;background:#c6c6c6"></div>
<div class="t" style="right:1353.5px;top:649.86px;font:normal normal 14.5px/1 'Liberation Serif', serif;color:#333;">37</div>
<div class="t" style="right:1353.5px;top:673.86px;font:normal normal 14.5px/1 'Liberation Serif', serif;color:#333;">38</div>
<div style="left:1344px;top:250px;width:1px;height:428px;background:#a0a0a0"></div>
<div style="left:0px;top:678px;width:1345px;height:1px;background:#a8a8a8"></div>
<div style="left:459px;top:504px;width:97px;height:24px;background:#b7dbe6"></div>
<div style="left:23px;top:273px;width:1316px;height:1px;background:repeating-linear-gradient(to right,#000 0 1px,transparent 1px 2px)"></div>
<div style="left:1340px;top:273px;width:4px;height:1px;background:#d4d4d4"></div>
<div style="left:214px;top:251px;width:1px;height:22px;background:repeating-linear-gradient(to bottom,#000 0 1px,transparent 1px 2px)"></div>
<div style="left:458px;top:251px;width:1px;height:22px;background:repeating-linear-gradient(to bottom,#000 0 1px,transparent 1px 2px)"></div>
<div style="left:556px;top:251px;width:1px;height:22px;background:repeating-linear-gradient(to bottom,#000 0 1px,transparent 1px 2px)"></div>
<div style="left:607px;top:251px;width:1px;height:22px;background:repeating-linear-gradient(to bottom,#000 0 1px,transparent 1px 2px)"></div>
<div style="left:701px;top:251px;width:1px;height:22px;background:repeating-linear-gradient(to bottom,#000 0 1px,transparent 1px 2px)"></div>
<div style="left:757px;top:251px;width:1px;height:22px;background:repeating-linear-gradient(to bottom,#000 0 1px,transparent 1px 2px)"></div>
<div style="left:812px;top:251px;width:1px;height:22px;background:repeating-linear-gradient(to bottom,#000 0 1px,transparent 1px 2px)"></div>
<div style="left:872px;top:251px;width:1px;height:22px;background:repeating-linear-gradient(to bottom,#000 0 1px,transparent 1px 2px)"></div>
<div style="left:927px;top:251px;width:1px;height:22px;background:repeating-linear-gradient(to bottom,#000 0 1px,transparent 1px 2px)"></div>
<div style="left:983px;top:251px;width:1px;height:22px;background:repeating-linear-gradient(to bottom,#000 0 1px,transparent 1px 2px)"></div>
<div style="left:1039px;top:251px;width:1px;height:22px;background:repeating-linear-gradient(to bottom,#000 0 1px,transparent 1px 2px)"></div>
<div style="left:1095px;top:251px;width:1px;height:22px;background:repeating-linear-gradient(to bottom,#000 0 1px,transparent 1px 2px)"></div>
<div style="left:1151px;top:251px;width:1px;height:22px;background:repeating-linear-gradient(to bottom,#000 0 1px,transparent 1px 2px)"></div>
<div style="left:1207px;top:251px;width:1px;height:22px;background:repeating-linear-gradient(to bottom,#000 0 1px,transparent 1px 2px)"></div>
<div style="left:1273px;top:251px;width:1px;height:22px;background:repeating-linear-gradient(to bottom,#000 0 1px,transparent 1px 2px)"></div>
<div class="t" style="left:26.3px;top:254.76px;font:normal bold 17px/1 'Liberation Serif', serif;color:#000;">2. Số tin đã giải quyết:</div>
<div style="left:541px;top:265px;width:6px;height:1px;background:#000"></div>
<div style="left:686px;top:265px;width:6px;height:1px;background:#000"></div>
<div style="left:742px;top:265px;width:6px;height:1px;background:#000"></div>
<div style="left:797px;top:265px;width:6px;height:1px;background:#000"></div>
<div style="left:857px;top:265px;width:6px;height:1px;background:#000"></div>
<div style="left:912px;top:265px;width:6px;height:1px;background:#000"></div>
<div style="left:968px;top:265px;width:6px;height:1px;background:#000"></div>
<div style="left:1024px;top:265px;width:6px;height:1px;background:#000"></div>
<div style="left:1080px;top:265px;width:6px;height:1px;background:#000"></div>
<div style="left:1136px;top:265px;width:6px;height:1px;background:#000"></div>
<div style="left:1192px;top:265px;width:6px;height:1px;background:#000"></div>
<div style="left:1258px;top:265px;width:6px;height:1px;background:#000"></div>
<div style="left:1324px;top:265px;width:6px;height:1px;background:#000"></div>
<div style="left:23px;top:296px;width:1316px;height:1px;background:repeating-linear-gradient(to right,#000 0 1px,transparent 1px 2px)"></div>
<div style="left:1340px;top:296px;width:4px;height:1px;background:#d4d4d4"></div>
<div style="left:112px;top:274px;width:1px;height:22px;background:repeating-linear-gradient(to bottom,#000 0 1px,transparent 1px 2px)"></div>
<div style="left:163px;top:274px;width:1px;height:22px;background:repeating-linear-gradient(to bottom,#000 0 1px,transparent 1px 2px)"></div>
<div style="left:214px;top:274px;width:1px;height:22px;background:repeating-linear-gradient(to bottom,#000 0 1px,transparent 1px 2px)"></div>
<div style="left:458px;top:274px;width:1px;height:22px;background:repeating-linear-gradient(to bottom,#000 0 1px,transparent 1px 2px)"></div>
<div style="left:556px;top:274px;width:1px;height:22px;background:repeating-linear-gradient(to bottom,#000 0 1px,transparent 1px 2px)"></div>
<div style="left:607px;top:274px;width:1px;height:22px;background:repeating-linear-gradient(to bottom,#000 0 1px,transparent 1px 2px)"></div>
<div style="left:701px;top:274px;width:1px;height:22px;background:repeating-linear-gradient(to bottom,#000 0 1px,transparent 1px 2px)"></div>
<div style="left:757px;top:274px;width:1px;height:22px;background:repeating-linear-gradient(to bottom,#000 0 1px,transparent 1px 2px)"></div>
<div style="left:812px;top:274px;width:1px;height:22px;background:repeating-linear-gradient(to bottom,#000 0 1px,transparent 1px 2px)"></div>
<div style="left:872px;top:274px;width:1px;height:22px;background:repeating-linear-gradient(to bottom,#000 0 1px,transparent 1px 2px)"></div>
<div style="left:927px;top:274px;width:1px;height:22px;background:repeating-linear-gradient(to bottom,#000 0 1px,transparent 1px 2px)"></div>
<div style="left:983px;top:274px;width:1px;height:22px;background:repeating-linear-gradient(to bottom,#000 0 1px,transparent 1px 2px)"></div>
<div style="left:1039px;top:274px;width:1px;height:22px;background:repeating-linear-gradient(to bottom,#000 0 1px,transparent 1px 2px)"></div>
<div style="left:1095px;top:274px;width:1px;height:22px;background:repeating-linear-gradient(to bottom,#000 0 1px,transparent 1px 2px)"></div>
<div style="left:1151px;top:274px;width:1px;height:22px;background:repeating-linear-gradient(to bottom,#000 0 1px,transparent 1px 2px)"></div>
<div style="left:1207px;top:274px;width:1px;height:22px;background:repeating-linear-gradient(to bottom,#000 0 1px,transparent 1px 2px)"></div>
<div style="left:1273px;top:274px;width:1px;height:22px;background:repeating-linear-gradient(to bottom,#000 0 1px,transparent 1px 2px)"></div>
<div class="t" style="left:34.8px;top:277.76px;font:normal normal 17px/1 'Liberation Serif', serif;color:#000;letter-spacing:-0.22px">- Trong đó:</div>
<div style="left:23px;top:319px;width:1316px;height:1px;background:repeating-linear-gradient(to right,#000 0 1px,transparent 1px 2px)"></div>
<div style="left:1340px;top:319px;width:4px;height:1px;background:#d4d4d4"></div>
<div style="left:163px;top:297px;width:1px;height:22px;background:repeating-linear-gradient(to bottom,#000 0 1px,transparent 1px 2px)"></div>
<div style="left:214px;top:297px;width:1px;height:22px;background:repeating-linear-gradient(to bottom,#000 0 1px,transparent 1px 2px)"></div>
<div style="left:458px;top:297px;width:1px;height:22px;background:repeating-linear-gradient(to bottom,#000 0 1px,transparent 1px 2px)"></div>
<div style="left:556px;top:297px;width:1px;height:22px;background:repeating-linear-gradient(to bottom,#000 0 1px,transparent 1px 2px)"></div>
<div style="left:607px;top:297px;width:1px;height:22px;background:repeating-linear-gradient(to bottom,#000 0 1px,transparent 1px 2px)"></div>
<div style="left:701px;top:297px;width:1px;height:22px;background:repeating-linear-gradient(to bottom,#000 0 1px,transparent 1px 2px)"></div>
<div style="left:757px;top:297px;width:1px;height:22px;background:repeating-linear-gradient(to bottom,#000 0 1px,transparent 1px 2px)"></div>
<div style="left:812px;top:297px;width:1px;height:22px;background:repeating-linear-gradient(to bottom,#000 0 1px,transparent 1px 2px)"></div>
<div style="left:872px;top:297px;width:1px;height:22px;background:repeating-linear-gradient(to bottom,#000 0 1px,transparent 1px 2px)"></div>
<div style="left:927px;top:297px;width:1px;height:22px;background:repeating-linear-gradient(to bottom,#000 0 1px,transparent 1px 2px)"></div>
<div style="left:983px;top:297px;width:1px;height:22px;background:repeating-linear-gradient(to bottom,#000 0 1px,transparent 1px 2px)"></div>
<div style="left:1039px;top:297px;width:1px;height:22px;background:repeating-linear-gradient(to bottom,#000 0 1px,transparent 1px 2px)"></div>
<div style="left:1095px;top:297px;width:1px;height:22px;background:repeating-linear-gradient(to bottom,#000 0 1px,transparent 1px 2px)"></div>
<div style="left:1151px;top:297px;width:1px;height:22px;background:repeating-linear-gradient(to bottom,#000 0 1px,transparent 1px 2px)"></div>
<div style="left:1207px;top:297px;width:1px;height:22px;background:repeating-linear-gradient(to bottom,#000 0 1px,transparent 1px 2px)"></div>
<div style="left:1273px;top:297px;width:1px;height:22px;background:repeating-linear-gradient(to bottom,#000 0 1px,transparent 1px 2px)"></div>
<div class="t" style="left:39px;top:300.76px;font:normal normal 17px/1 'Liberation Serif', serif;color:#000;letter-spacing:-0.22px">+ Khởi tố vụ án:</div>
<div style="left:541px;top:311px;width:6px;height:1px;background:#000"></div>
<div style="left:686px;top:311px;width:6px;height:1px;background:#000"></div>
<div style="left:742px;top:311px;width:6px;height:1px;background:#000"></div>
<div style="left:797px;top:311px;width:6px;height:1px;background:#000"></div>
<div style="left:857px;top:311px;width:6px;height:1px;background:#000"></div>
<div style="left:912px;top:311px;width:6px;height:1px;background:#000"></div>
<div style="left:968px;top:311px;width:6px;height:1px;background:#000"></div>
<div style="left:1024px;top:311px;width:6px;height:1px;background:#000"></div>
<div style="left:1080px;top:311px;width:6px;height:1px;background:#000"></div>
<div style="left:1136px;top:311px;width:6px;height:1px;background:#000"></div>
<div style="left:1192px;top:311px;width:6px;height:1px;background:#000"></div>
<div style="left:1258px;top:311px;width:6px;height:1px;background:#000"></div>
<div style="left:1324px;top:311px;width:6px;height:1px;background:#000"></div>
<div style="left:23px;top:342px;width:1316px;height:1px;background:repeating-linear-gradient(to right,#000 0 1px,transparent 1px 2px)"></div>
<div style="left:1340px;top:342px;width:4px;height:1px;background:#d4d4d4"></div>
<div style="left:214px;top:320px;width:1px;height:22px;background:repeating-linear-gradient(to bottom,#000 0 1px,transparent 1px 2px)"></div>
<div style="left:458px;top:320px;width:1px;height:22px;background:repeating-linear-gradient(to bottom,#000 0 1px,transparent 1px 2px)"></div>
<div style="left:556px;top:320px;width:1px;height:22px;background:repeating-linear-gradient(to bottom,#000 0 1px,transparent 1px 2px)"></div>
<div style="left:607px;top:320px;width:1px;height:22px;background:repeating-linear-gradient(to bottom,#000 0 1px,transparent 1px 2px)"></div>
<div style="left:701px;top:320px;width:1px;height:22px;background:repeating-linear-gradient(to bottom,#000 0 1px,transparent 1px 2px)"></div>
<div style="left:757px;top:320px;width:1px;height:22px;background:repeating-linear-gradient(to bottom,#000 0 1px,transparent 1px 2px)"></div>
<div style="left:812px;top:320px;width:1px;height:22px;background:repeating-linear-gradient(to bottom,#000 0 1px,transparent 1px 2px)"></div>
<div style="left:872px;top:320px;width:1px;height:22px;background:repeating-linear-gradient(to bottom,#000 0 1px,transparent 1px 2px)"></div>
<div style="left:927px;top:320px;width:1px;height:22px;background:repeating-linear-gradient(to bottom,#000 0 1px,transparent 1px 2px)"></div>
<div style="left:983px;top:320px;width:1px;height:22px;background:repeating-linear-gradient(to bottom,#000 0 1px,transparent 1px 2px)"></div>
<div style="left:1039px;top:320px;width:1px;height:22px;background:repeating-linear-gradient(to bottom,#000 0 1px,transparent 1px 2px)"></div>
<div style="left:1095px;top:320px;width:1px;height:22px;background:repeating-linear-gradient(to bottom,#000 0 1px,transparent 1px 2px)"></div>
<div style="left:1151px;top:320px;width:1px;height:22px;background:repeating-linear-gradient(to bottom,#000 0 1px,transparent 1px 2px)"></div>
<div style="left:1207px;top:320px;width:1px;height:22px;background:repeating-linear-gradient(to bottom,#000 0 1px,transparent 1px 2px)"></div>
<div style="left:1273px;top:320px;width:1px;height:22px;background:repeating-linear-gradient(to bottom,#000 0 1px,transparent 1px 2px)"></div>
<div class="t" style="left:38.5px;top:323.76px;font:normal normal 17px/1 'Liberation Serif', serif;color:#000;letter-spacing:-0.22px">+ Không khởi tố vụ án:</div>
<div style="left:541px;top:334px;width:6px;height:1px;background:#000"></div>
<div style="left:686px;top:334px;width:6px;height:1px;background:#000"></div>
<div style="left:742px;top:334px;width:6px;height:1px;background:#000"></div>
<div style="left:797px;top:334px;width:6px;height:1px;background:#000"></div>
<div style="left:857px;top:334px;width:6px;height:1px;background:#000"></div>
<div style="left:912px;top:334px;width:6px;height:1px;background:#000"></div>
<div style="left:968px;top:334px;width:6px;height:1px;background:#000"></div>
<div style="left:1024px;top:334px;width:6px;height:1px;background:#000"></div>
<div style="left:1080px;top:334px;width:6px;height:1px;background:#000"></div>
<div style="left:1136px;top:334px;width:6px;height:1px;background:#000"></div>
<div style="left:1192px;top:334px;width:6px;height:1px;background:#000"></div>
<div style="left:1258px;top:334px;width:6px;height:1px;background:#000"></div>
<div style="left:1324px;top:334px;width:6px;height:1px;background:#000"></div>
<div style="left:23px;top:365px;width:1316px;height:1px;background:repeating-linear-gradient(to right,#000 0 1px,transparent 1px 2px)"></div>
<div style="left:1340px;top:365px;width:4px;height:1px;background:#d4d4d4"></div>
<div style="left:163px;top:343px;width:1px;height:22px;background:repeating-linear-gradient(to bottom,#000 0 1px,transparent 1px 2px)"></div>
<div style="left:214px;top:343px;width:1px;height:22px;background:repeating-linear-gradient(to bottom,#000 0 1px,transparent 1px 2px)"></div>
<div style="left:458px;top:343px;width:1px;height:22px;background:repeating-linear-gradient(to bottom,#000 0 1px,transparent 1px 2px)"></div>
<div style="left:556px;top:343px;width:1px;height:22px;background:repeating-linear-gradient(to bottom,#000 0 1px,transparent 1px 2px)"></div>
<div style="left:607px;top:343px;width:1px;height:22px;background:repeating-linear-gradient(to bottom,#000 0 1px,transparent 1px 2px)"></div>
<div style="left:701px;top:343px;width:1px;height:22px;background:repeating-linear-gradient(to bottom,#000 0 1px,transparent 1px 2px)"></div>
<div style="left:757px;top:343px;width:1px;height:22px;background:repeating-linear-gradient(to bottom,#000 0 1px,transparent 1px 2px)"></div>
<div style="left:812px;top:343px;width:1px;height:22px;background:repeating-linear-gradient(to bottom,#000 0 1px,transparent 1px 2px)"></div>
<div style="left:872px;top:343px;width:1px;height:22px;background:repeating-linear-gradient(to bottom,#000 0 1px,transparent 1px 2px)"></div>
<div style="left:927px;top:343px;width:1px;height:22px;background:repeating-linear-gradient(to bottom,#000 0 1px,transparent 1px 2px)"></div>
<div style="left:983px;top:343px;width:1px;height:22px;background:repeating-linear-gradient(to bottom,#000 0 1px,transparent 1px 2px)"></div>
<div style="left:1039px;top:343px;width:1px;height:22px;background:repeating-linear-gradient(to bottom,#000 0 1px,transparent 1px 2px)"></div>
<div style="left:1095px;top:343px;width:1px;height:22px;background:repeating-linear-gradient(to bottom,#000 0 1px,transparent 1px 2px)"></div>
<div style="left:1151px;top:343px;width:1px;height:22px;background:repeating-linear-gradient(to bottom,#000 0 1px,transparent 1px 2px)"></div>
<div style="left:1207px;top:343px;width:1px;height:22px;background:repeating-linear-gradient(to bottom,#000 0 1px,transparent 1px 2px)"></div>
<div style="left:1273px;top:343px;width:1px;height:22px;background:repeating-linear-gradient(to bottom,#000 0 1px,transparent 1px 2px)"></div>
<div class="t" style="left:38.5px;top:346.76px;font:normal normal 17px/1 'Liberation Serif', serif;color:#000;letter-spacing:-0.22px">+ Tạm đình chỉ:</div>
<div style="left:541px;top:357px;width:6px;height:1px;background:#000"></div>
<div style="left:686px;top:357px;width:6px;height:1px;background:#000"></div>
<div style="left:742px;top:357px;width:6px;height:1px;background:#000"></div>
<div style="left:797px;top:357px;width:6px;height:1px;background:#000"></div>
<div style="left:857px;top:357px;width:6px;height:1px;background:#000"></div>
<div style="left:912px;top:357px;width:6px;height:1px;background:#000"></div>
<div style="left:968px;top:357px;width:6px;height:1px;background:#000"></div>
<div style="left:1024px;top:357px;width:6px;height:1px;background:#000"></div>
<div style="left:1080px;top:357px;width:6px;height:1px;background:#000"></div>
<div style="left:1136px;top:357px;width:6px;height:1px;background:#000"></div>
<div style="left:1192px;top:357px;width:6px;height:1px;background:#000"></div>
<div style="left:1258px;top:357px;width:6px;height:1px;background:#000"></div>
<div style="left:1324px;top:357px;width:6px;height:1px;background:#000"></div>
<div style="left:23px;top:388px;width:1316px;height:1px;background:repeating-linear-gradient(to right,#000 0 1px,transparent 1px 2px)"></div>
<div style="left:1340px;top:388px;width:4px;height:1px;background:#d4d4d4"></div>
<div style="left:214px;top:366px;width:1px;height:22px;background:repeating-linear-gradient(to bottom,#000 0 1px,transparent 1px 2px)"></div>
<div style="left:458px;top:366px;width:1px;height:22px;background:repeating-linear-gradient(to bottom,#000 0 1px,transparent 1px 2px)"></div>
<div style="left:556px;top:366px;width:1px;height:22px;background:repeating-linear-gradient(to bottom,#000 0 1px,transparent 1px 2px)"></div>
<div style="left:607px;top:366px;width:1px;height:22px;background:repeating-linear-gradient(to bottom,#000 0 1px,transparent 1px 2px)"></div>
<div style="left:701px;top:366px;width:1px;height:22px;background:repeating-linear-gradient(to bottom,#000 0 1px,transparent 1px 2px)"></div>
<div style="left:757px;top:366px;width:1px;height:22px;background:repeating-linear-gradient(to bottom,#000 0 1px,transparent 1px 2px)"></div>
<div style="left:812px;top:366px;width:1px;height:22px;background:repeating-linear-gradient(to bottom,#000 0 1px,transparent 1px 2px)"></div>
<div style="left:872px;top:366px;width:1px;height:22px;background:repeating-linear-gradient(to bottom,#000 0 1px,transparent 1px 2px)"></div>
<div style="left:927px;top:366px;width:1px;height:22px;background:repeating-linear-gradient(to bottom,#000 0 1px,transparent 1px 2px)"></div>
<div style="left:983px;top:366px;width:1px;height:22px;background:repeating-linear-gradient(to bottom,#000 0 1px,transparent 1px 2px)"></div>
<div style="left:1039px;top:366px;width:1px;height:22px;background:repeating-linear-gradient(to bottom,#000 0 1px,transparent 1px 2px)"></div>
<div style="left:1095px;top:366px;width:1px;height:22px;background:repeating-linear-gradient(to bottom,#000 0 1px,transparent 1px 2px)"></div>
<div style="left:1151px;top:366px;width:1px;height:22px;background:repeating-linear-gradient(to bottom,#000 0 1px,transparent 1px 2px)"></div>
<div style="left:1207px;top:366px;width:1px;height:22px;background:repeating-linear-gradient(to bottom,#000 0 1px,transparent 1px 2px)"></div>
<div style="left:1273px;top:366px;width:1px;height:22px;background:repeating-linear-gradient(to bottom,#000 0 1px,transparent 1px 2px)"></div>
<div class="t" style="left:38.5px;top:369.76px;font:normal normal 17px/1 'Liberation Serif', serif;color:#000;letter-spacing:-0.22px">+ Chuyển đi nơi khác:</div>
<div style="left:541px;top:380px;width:6px;height:1px;background:#000"></div>
<div style="left:686px;top:380px;width:6px;height:1px;background:#000"></div>
<div style="left:742px;top:380px;width:6px;height:1px;background:#000"></div>
<div style="left:797px;top:380px;width:6px;height:1px;background:#000"></div>
<div style="left:857px;top:380px;width:6px;height:1px;background:#000"></div>
<div style="left:912px;top:380px;width:6px;height:1px;background:#000"></div>
<div style="left:968px;top:380px;width:6px;height:1px;background:#000"></div>
<div style="left:1024px;top:380px;width:6px;height:1px;background:#000"></div>
<div style="left:1080px;top:380px;width:6px;height:1px;background:#000"></div>
<div style="left:1136px;top:380px;width:6px;height:1px;background:#000"></div>
<div style="left:1192px;top:380px;width:6px;height:1px;background:#000"></div>
<div style="left:1258px;top:380px;width:6px;height:1px;background:#000"></div>
<div style="left:1324px;top:380px;width:6px;height:1px;background:#000"></div>
<div style="left:23px;top:411px;width:1316px;height:1px;background:repeating-linear-gradient(to right,#000 0 1px,transparent 1px 2px)"></div>
<div style="left:1340px;top:411px;width:4px;height:1px;background:#d4d4d4"></div>
<div style="left:73px;top:389px;width:1px;height:22px;background:repeating-linear-gradient(to bottom,#000 0 1px,transparent 1px 2px)"></div>
<div style="left:112px;top:389px;width:1px;height:22px;background:repeating-linear-gradient(to bottom,#000 0 1px,transparent 1px 2px)"></div>
<div style="left:163px;top:389px;width:1px;height:22px;background:repeating-linear-gradient(to bottom,#000 0 1px,transparent 1px 2px)"></div>
<div style="left:214px;top:389px;width:1px;height:22px;background:repeating-linear-gradient(to bottom,#000 0 1px,transparent 1px 2px)"></div>
<div style="left:458px;top:389px;width:1px;height:22px;background:repeating-linear-gradient(to bottom,#000 0 1px,transparent 1px 2px)"></div>
<div style="left:556px;top:389px;width:1px;height:22px;background:repeating-linear-gradient(to bottom,#000 0 1px,transparent 1px 2px)"></div>
<div style="left:607px;top:389px;width:1px;height:22px;background:repeating-linear-gradient(to bottom,#000 0 1px,transparent 1px 2px)"></div>
<div style="left:701px;top:389px;width:1px;height:22px;background:repeating-linear-gradient(to bottom,#000 0 1px,transparent 1px 2px)"></div>
<div style="left:757px;top:389px;width:1px;height:22px;background:repeating-linear-gradient(to bottom,#000 0 1px,transparent 1px 2px)"></div>
<div style="left:812px;top:389px;width:1px;height:22px;background:repeating-linear-gradient(to bottom,#000 0 1px,transparent 1px 2px)"></div>
<div style="left:872px;top:389px;width:1px;height:22px;background:repeating-linear-gradient(to bottom,#000 0 1px,transparent 1px 2px)"></div>
<div style="left:927px;top:389px;width:1px;height:22px;background:repeating-linear-gradient(to bottom,#000 0 1px,transparent 1px 2px)"></div>
<div style="left:983px;top:389px;width:1px;height:22px;background:repeating-linear-gradient(to bottom,#000 0 1px,transparent 1px 2px)"></div>
<div style="left:1039px;top:389px;width:1px;height:22px;background:repeating-linear-gradient(to bottom,#000 0 1px,transparent 1px 2px)"></div>
<div style="left:1095px;top:389px;width:1px;height:22px;background:repeating-linear-gradient(to bottom,#000 0 1px,transparent 1px 2px)"></div>
<div style="left:1151px;top:389px;width:1px;height:22px;background:repeating-linear-gradient(to bottom,#000 0 1px,transparent 1px 2px)"></div>
<div style="left:1207px;top:389px;width:1px;height:22px;background:repeating-linear-gradient(to bottom,#000 0 1px,transparent 1px 2px)"></div>
<div style="left:1273px;top:389px;width:1px;height:22px;background:repeating-linear-gradient(to bottom,#000 0 1px,transparent 1px 2px)"></div>
<div style="left:23px;top:434px;width:1316px;height:1px;background:repeating-linear-gradient(to right,#000 0 1px,transparent 1px 2px)"></div>
<div style="left:1340px;top:434px;width:4px;height:1px;background:#d4d4d4"></div>
<div style="left:163px;top:412px;width:1px;height:22px;background:repeating-linear-gradient(to bottom,#000 0 1px,transparent 1px 2px)"></div>
<div style="left:214px;top:412px;width:1px;height:22px;background:repeating-linear-gradient(to bottom,#000 0 1px,transparent 1px 2px)"></div>
<div style="left:458px;top:412px;width:1px;height:22px;background:repeating-linear-gradient(to bottom,#000 0 1px,transparent 1px 2px)"></div>
<div style="left:556px;top:412px;width:1px;height:22px;background:repeating-linear-gradient(to bottom,#000 0 1px,transparent 1px 2px)"></div>
<div style="left:607px;top:412px;width:1px;height:22px;background:repeating-linear-gradient(to bottom,#000 0 1px,transparent 1px 2px)"></div>
<div style="left:701px;top:412px;width:1px;height:22px;background:repeating-linear-gradient(to bottom,#000 0 1px,transparent 1px 2px)"></div>
<div style="left:757px;top:412px;width:1px;height:22px;background:repeating-linear-gradient(to bottom,#000 0 1px,transparent 1px 2px)"></div>
<div style="left:812px;top:412px;width:1px;height:22px;background:repeating-linear-gradient(to bottom,#000 0 1px,transparent 1px 2px)"></div>
<div style="left:872px;top:412px;width:1px;height:22px;background:repeating-linear-gradient(to bottom,#000 0 1px,transparent 1px 2px)"></div>
<div style="left:927px;top:412px;width:1px;height:22px;background:repeating-linear-gradient(to bottom,#000 0 1px,transparent 1px 2px)"></div>
<div style="left:983px;top:412px;width:1px;height:22px;background:repeating-linear-gradient(to bottom,#000 0 1px,transparent 1px 2px)"></div>
<div style="left:1039px;top:412px;width:1px;height:22px;background:repeating-linear-gradient(to bottom,#000 0 1px,transparent 1px 2px)"></div>
<div style="left:1095px;top:412px;width:1px;height:22px;background:repeating-linear-gradient(to bottom,#000 0 1px,transparent 1px 2px)"></div>
<div style="left:1151px;top:412px;width:1px;height:22px;background:repeating-linear-gradient(to bottom,#000 0 1px,transparent 1px 2px)"></div>
<div style="left:1207px;top:412px;width:1px;height:22px;background:repeating-linear-gradient(to bottom,#000 0 1px,transparent 1px 2px)"></div>
<div style="left:1273px;top:412px;width:1px;height:22px;background:repeating-linear-gradient(to bottom,#000 0 1px,transparent 1px 2px)"></div>
<div class="t" style="left:26.3px;top:415.76px;font:normal bold 17px/1 'Liberation Serif', serif;color:#000;">3. Số tin còn lại:</div>
<div style="left:541px;top:426px;width:6px;height:1px;background:#000"></div>
<div style="left:686px;top:426px;width:6px;height:1px;background:#000"></div>
<div style="left:742px;top:426px;width:6px;height:1px;background:#000"></div>
<div style="left:797px;top:426px;width:6px;height:1px;background:#000"></div>
<div style="left:857px;top:426px;width:6px;height:1px;background:#000"></div>
<div style="left:912px;top:426px;width:6px;height:1px;background:#000"></div>
<div style="left:968px;top:426px;width:6px;height:1px;background:#000"></div>
<div style="left:1024px;top:426px;width:6px;height:1px;background:#000"></div>
<div style="left:1080px;top:426px;width:6px;height:1px;background:#000"></div>
<div style="left:1136px;top:426px;width:6px;height:1px;background:#000"></div>
<div style="left:1192px;top:426px;width:6px;height:1px;background:#000"></div>
<div style="left:1258px;top:426px;width:6px;height:1px;background:#000"></div>
<div style="left:1324px;top:426px;width:6px;height:1px;background:#000"></div>
<div style="left:23px;top:457px;width:1316px;height:1px;background:repeating-linear-gradient(to right,#000 0 1px,transparent 1px 2px)"></div>
<div style="left:1340px;top:457px;width:4px;height:1px;background:#d4d4d4"></div>
<div style="left:163px;top:435px;width:1px;height:22px;background:repeating-linear-gradient(to bottom,#000 0 1px,transparent 1px 2px)"></div>
<div style="left:214px;top:435px;width:1px;height:22px;background:repeating-linear-gradient(to bottom,#000 0 1px,transparent 1px 2px)"></div>
<div style="left:458px;top:435px;width:1px;height:22px;background:repeating-linear-gradient(to bottom,#000 0 1px,transparent 1px 2px)"></div>
<div style="left:556px;top:435px;width:1px;height:22px;background:repeating-linear-gradient(to bottom,#000 0 1px,transparent 1px 2px)"></div>
<div style="left:607px;top:435px;width:1px;height:22px;background:repeating-linear-gradient(to bottom,#000 0 1px,transparent 1px 2px)"></div>
<div style="left:701px;top:435px;width:1px;height:22px;background:repeating-linear-gradient(to bottom,#000 0 1px,transparent 1px 2px)"></div>
<div style="left:757px;top:435px;width:1px;height:22px;background:repeating-linear-gradient(to bottom,#000 0 1px,transparent 1px 2px)"></div>
<div style="left:812px;top:435px;width:1px;height:22px;background:repeating-linear-gradient(to bottom,#000 0 1px,transparent 1px 2px)"></div>
<div style="left:872px;top:435px;width:1px;height:22px;background:repeating-linear-gradient(to bottom,#000 0 1px,transparent 1px 2px)"></div>
<div style="left:927px;top:435px;width:1px;height:22px;background:repeating-linear-gradient(to bottom,#000 0 1px,transparent 1px 2px)"></div>
<div style="left:983px;top:435px;width:1px;height:22px;background:repeating-linear-gradient(to bottom,#000 0 1px,transparent 1px 2px)"></div>
<div style="left:1039px;top:435px;width:1px;height:22px;background:repeating-linear-gradient(to bottom,#000 0 1px,transparent 1px 2px)"></div>
<div style="left:1095px;top:435px;width:1px;height:22px;background:repeating-linear-gradient(to bottom,#000 0 1px,transparent 1px 2px)"></div>
<div style="left:1151px;top:435px;width:1px;height:22px;background:repeating-linear-gradient(to bottom,#000 0 1px,transparent 1px 2px)"></div>
<div style="left:1207px;top:435px;width:1px;height:22px;background:repeating-linear-gradient(to bottom,#000 0 1px,transparent 1px 2px)"></div>
<div style="left:1273px;top:435px;width:1px;height:22px;background:repeating-linear-gradient(to bottom,#000 0 1px,transparent 1px 2px)"></div>
<div class="t" style="left:38.9px;top:438.76px;font:normal normal 17px/1 'Liberation Serif', serif;color:#000;letter-spacing:-0.22px">- Trong đó:</div>
<div style="left:23px;top:480px;width:1316px;height:1px;background:repeating-linear-gradient(to right,#000 0 1px,transparent 1px 2px)"></div>
<div style="left:1340px;top:480px;width:4px;height:1px;background:#d4d4d4"></div>
<div style="left:73px;top:458px;width:1px;height:22px;background:repeating-linear-gradient(to bottom,#000 0 1px,transparent 1px 2px)"></div>
<div style="left:163px;top:458px;width:1px;height:22px;background:repeating-linear-gradient(to bottom,#000 0 1px,transparent 1px 2px)"></div>
<div style="left:214px;top:458px;width:1px;height:22px;background:repeating-linear-gradient(to bottom,#000 0 1px,transparent 1px 2px)"></div>
<div style="left:458px;top:458px;width:1px;height:22px;background:repeating-linear-gradient(to bottom,#000 0 1px,transparent 1px 2px)"></div>
<div style="left:556px;top:458px;width:1px;height:22px;background:repeating-linear-gradient(to bottom,#000 0 1px,transparent 1px 2px)"></div>
<div style="left:607px;top:458px;width:1px;height:22px;background:repeating-linear-gradient(to bottom,#000 0 1px,transparent 1px 2px)"></div>
<div style="left:701px;top:458px;width:1px;height:22px;background:repeating-linear-gradient(to bottom,#000 0 1px,transparent 1px 2px)"></div>
<div style="left:757px;top:458px;width:1px;height:22px;background:repeating-linear-gradient(to bottom,#000 0 1px,transparent 1px 2px)"></div>
<div style="left:812px;top:458px;width:1px;height:22px;background:repeating-linear-gradient(to bottom,#000 0 1px,transparent 1px 2px)"></div>
<div style="left:872px;top:458px;width:1px;height:22px;background:repeating-linear-gradient(to bottom,#000 0 1px,transparent 1px 2px)"></div>
<div style="left:927px;top:458px;width:1px;height:22px;background:repeating-linear-gradient(to bottom,#000 0 1px,transparent 1px 2px)"></div>
<div style="left:983px;top:458px;width:1px;height:22px;background:repeating-linear-gradient(to bottom,#000 0 1px,transparent 1px 2px)"></div>
<div style="left:1039px;top:458px;width:1px;height:22px;background:repeating-linear-gradient(to bottom,#000 0 1px,transparent 1px 2px)"></div>
<div style="left:1095px;top:458px;width:1px;height:22px;background:repeating-linear-gradient(to bottom,#000 0 1px,transparent 1px 2px)"></div>
<div style="left:1151px;top:458px;width:1px;height:22px;background:repeating-linear-gradient(to bottom,#000 0 1px,transparent 1px 2px)"></div>
<div style="left:1207px;top:458px;width:1px;height:22px;background:repeating-linear-gradient(to bottom,#000 0 1px,transparent 1px 2px)"></div>
<div style="left:1273px;top:458px;width:1px;height:22px;background:repeating-linear-gradient(to bottom,#000 0 1px,transparent 1px 2px)"></div>
<div class="t" style="left:77.4px;top:461.76px;font:normal normal 17px/1 'Liberation Serif', serif;color:#000;letter-spacing:-0.22px">+ Quá hạn:</div>
<div style="left:541px;top:472px;width:6px;height:1px;background:#000"></div>
<div style="left:686px;top:472px;width:6px;height:1px;background:#000"></div>
<div style="left:742px;top:472px;width:6px;height:1px;background:#000"></div>
<div style="left:797px;top:472px;width:6px;height:1px;background:#000"></div>
<div style="left:857px;top:472px;width:6px;height:1px;background:#000"></div>
<div style="left:912px;top:472px;width:6px;height:1px;background:#000"></div>
<div style="left:968px;top:472px;width:6px;height:1px;background:#000"></div>
<div style="left:1024px;top:472px;width:6px;height:1px;background:#000"></div>
<div style="left:1080px;top:472px;width:6px;height:1px;background:#000"></div>
<div style="left:1136px;top:472px;width:6px;height:1px;background:#000"></div>
<div style="left:1192px;top:472px;width:6px;height:1px;background:#000"></div>
<div style="left:1258px;top:472px;width:6px;height:1px;background:#000"></div>
<div style="left:1324px;top:472px;width:6px;height:1px;background:#000"></div>
<div style="left:23px;top:503px;width:1316px;height:1px;background:repeating-linear-gradient(to right,#000 0 1px,transparent 1px 2px)"></div>
<div style="left:1340px;top:503px;width:4px;height:1px;background:#d4d4d4"></div>
<div style="left:73px;top:481px;width:1px;height:22px;background:repeating-linear-gradient(to bottom,#000 0 1px,transparent 1px 2px)"></div>
<div style="left:458px;top:481px;width:1px;height:22px;background:repeating-linear-gradient(to bottom,#000 0 1px,transparent 1px 2px)"></div>
<div style="left:556px;top:481px;width:1px;height:22px;background:repeating-linear-gradient(to bottom,#000 0 1px,transparent 1px 2px)"></div>
<div style="left:607px;top:481px;width:1px;height:22px;background:repeating-linear-gradient(to bottom,#000 0 1px,transparent 1px 2px)"></div>
<div style="left:701px;top:481px;width:1px;height:22px;background:repeating-linear-gradient(to bottom,#000 0 1px,transparent 1px 2px)"></div>
<div style="left:757px;top:481px;width:1px;height:22px;background:repeating-linear-gradient(to bottom,#000 0 1px,transparent 1px 2px)"></div>
<div style="left:812px;top:481px;width:1px;height:22px;background:repeating-linear-gradient(to bottom,#000 0 1px,transparent 1px 2px)"></div>
<div style="left:872px;top:481px;width:1px;height:22px;background:repeating-linear-gradient(to bottom,#000 0 1px,transparent 1px 2px)"></div>
<div style="left:927px;top:481px;width:1px;height:22px;background:repeating-linear-gradient(to bottom,#000 0 1px,transparent 1px 2px)"></div>
<div style="left:983px;top:481px;width:1px;height:22px;background:repeating-linear-gradient(to bottom,#000 0 1px,transparent 1px 2px)"></div>
<div style="left:1039px;top:481px;width:1px;height:22px;background:repeating-linear-gradient(to bottom,#000 0 1px,transparent 1px 2px)"></div>
<div style="left:1095px;top:481px;width:1px;height:22px;background:repeating-linear-gradient(to bottom,#000 0 1px,transparent 1px 2px)"></div>
<div style="left:1151px;top:481px;width:1px;height:22px;background:repeating-linear-gradient(to bottom,#000 0 1px,transparent 1px 2px)"></div>
<div style="left:1207px;top:481px;width:1px;height:22px;background:repeating-linear-gradient(to bottom,#000 0 1px,transparent 1px 2px)"></div>
<div style="left:1273px;top:481px;width:1px;height:22px;background:repeating-linear-gradient(to bottom,#000 0 1px,transparent 1px 2px)"></div>
<div class="t" style="left:77.4px;top:484.76px;font:normal normal 17px/1 'Liberation Serif', serif;color:#000;letter-spacing:-0.22px">+ Số TĐC đến cuối kỳ</div>
<div style="left:541px;top:495px;width:6px;height:1px;background:#000"></div>
<div style="left:686px;top:495px;width:6px;height:1px;background:#000"></div>
<div style="left:742px;top:495px;width:6px;height:1px;background:#000"></div>
<div style="left:797px;top:495px;width:6px;height:1px;background:#000"></div>
<div style="left:857px;top:495px;width:6px;height:1px;background:#000"></div>
<div style="left:912px;top:495px;width:6px;height:1px;background:#000"></div>
<div style="left:968px;top:495px;width:6px;height:1px;background:#000"></div>
<div style="left:1024px;top:495px;width:6px;height:1px;background:#000"></div>
<div style="left:1080px;top:495px;width:6px;height:1px;background:#000"></div>
<div style="left:1136px;top:495px;width:6px;height:1px;background:#000"></div>
<div style="left:1192px;top:495px;width:6px;height:1px;background:#000"></div>
<div style="left:1258px;top:495px;width:6px;height:1px;background:#000"></div>
<div style="left:1324px;top:495px;width:6px;height:1px;background:#000"></div>
<div style="left:23px;top:528px;width:1316px;height:1px;background:repeating-linear-gradient(to right,#000 0 1px,transparent 1px 2px)"></div>
<div style="left:1340px;top:528px;width:4px;height:1px;background:#d4d4d4"></div>
<div style="left:73px;top:504px;width:1px;height:24px;background:repeating-linear-gradient(to bottom,#000 0 1px,transparent 1px 2px)"></div>
<div style="left:112px;top:504px;width:1px;height:24px;background:repeating-linear-gradient(to bottom,#000 0 1px,transparent 1px 2px)"></div>
<div style="left:458px;top:504px;width:1px;height:24px;background:repeating-linear-gradient(to bottom,#000 0 1px,transparent 1px 2px)"></div>
<div style="left:556px;top:504px;width:1px;height:24px;background:repeating-linear-gradient(to bottom,#000 0 1px,transparent 1px 2px)"></div>
<div style="left:607px;top:504px;width:1px;height:24px;background:repeating-linear-gradient(to bottom,#000 0 1px,transparent 1px 2px)"></div>
<div style="left:701px;top:504px;width:1px;height:24px;background:repeating-linear-gradient(to bottom,#000 0 1px,transparent 1px 2px)"></div>
<div style="left:757px;top:504px;width:1px;height:24px;background:repeating-linear-gradient(to bottom,#000 0 1px,transparent 1px 2px)"></div>
<div style="left:812px;top:504px;width:1px;height:24px;background:repeating-linear-gradient(to bottom,#000 0 1px,transparent 1px 2px)"></div>
<div style="left:872px;top:504px;width:1px;height:24px;background:repeating-linear-gradient(to bottom,#000 0 1px,transparent 1px 2px)"></div>
<div style="left:927px;top:504px;width:1px;height:24px;background:repeating-linear-gradient(to bottom,#000 0 1px,transparent 1px 2px)"></div>
<div style="left:983px;top:504px;width:1px;height:24px;background:repeating-linear-gradient(to bottom,#000 0 1px,transparent 1px 2px)"></div>
<div style="left:1039px;top:504px;width:1px;height:24px;background:repeating-linear-gradient(to bottom,#000 0 1px,transparent 1px 2px)"></div>
<div style="left:1095px;top:504px;width:1px;height:24px;background:repeating-linear-gradient(to bottom,#000 0 1px,transparent 1px 2px)"></div>
<div style="left:1151px;top:504px;width:1px;height:24px;background:repeating-linear-gradient(to bottom,#000 0 1px,transparent 1px 2px)"></div>
<div style="left:1207px;top:504px;width:1px;height:24px;background:repeating-linear-gradient(to bottom,#000 0 1px,transparent 1px 2px)"></div>
<div style="left:1273px;top:504px;width:1px;height:24px;background:repeating-linear-gradient(to bottom,#000 0 1px,transparent 1px 2px)"></div>
<div class="t" style="left:117.5px;top:507.76px;font:italic normal 17px/1 'Liberation Serif', serif;color:#000;letter-spacing:0.14px">+ Trong đó: Số TĐC năm trước chuyển sang</div>
<div style="left:23px;top:551px;width:1316px;height:1px;background:repeating-linear-gradient(to right,#000 0 1px,transparent 1px 2px)"></div>
<div style="left:1340px;top:551px;width:4px;height:1px;background:#d4d4d4"></div>
<div style="left:73px;top:529px;width:1px;height:22px;background:repeating-linear-gradient(to bottom,#000 0 1px,transparent 1px 2px)"></div>
<div style="left:112px;top:529px;width:1px;height:22px;background:repeating-linear-gradient(to bottom,#000 0 1px,transparent 1px 2px)"></div>
<div style="left:163px;top:529px;width:1px;height:22px;background:repeating-linear-gradient(to bottom,#000 0 1px,transparent 1px 2px)"></div>
<div style="left:214px;top:529px;width:1px;height:22px;background:repeating-linear-gradient(to bottom,#000 0 1px,transparent 1px 2px)"></div>
<div style="left:458px;top:529px;width:1px;height:22px;background:repeating-linear-gradient(to bottom,#000 0 1px,transparent 1px 2px)"></div>
<div style="left:556px;top:529px;width:1px;height:22px;background:repeating-linear-gradient(to bottom,#000 0 1px,transparent 1px 2px)"></div>
<div style="left:607px;top:529px;width:1px;height:22px;background:repeating-linear-gradient(to bottom,#000 0 1px,transparent 1px 2px)"></div>
<div style="left:701px;top:529px;width:1px;height:22px;background:repeating-linear-gradient(to bottom,#000 0 1px,transparent 1px 2px)"></div>
<div style="left:757px;top:529px;width:1px;height:22px;background:repeating-linear-gradient(to bottom,#000 0 1px,transparent 1px 2px)"></div>
<div style="left:812px;top:529px;width:1px;height:22px;background:repeating-linear-gradient(to bottom,#000 0 1px,transparent 1px 2px)"></div>
<div style="left:872px;top:529px;width:1px;height:22px;background:repeating-linear-gradient(to bottom,#000 0 1px,transparent 1px 2px)"></div>
<div style="left:927px;top:529px;width:1px;height:22px;background:repeating-linear-gradient(to bottom,#000 0 1px,transparent 1px 2px)"></div>
<div style="left:983px;top:529px;width:1px;height:22px;background:repeating-linear-gradient(to bottom,#000 0 1px,transparent 1px 2px)"></div>
<div style="left:1039px;top:529px;width:1px;height:22px;background:repeating-linear-gradient(to bottom,#000 0 1px,transparent 1px 2px)"></div>
<div style="left:1095px;top:529px;width:1px;height:22px;background:repeating-linear-gradient(to bottom,#000 0 1px,transparent 1px 2px)"></div>
<div style="left:1151px;top:529px;width:1px;height:22px;background:repeating-linear-gradient(to bottom,#000 0 1px,transparent 1px 2px)"></div>
<div style="left:1207px;top:529px;width:1px;height:22px;background:repeating-linear-gradient(to bottom,#000 0 1px,transparent 1px 2px)"></div>
<div style="left:1273px;top:529px;width:1px;height:22px;background:repeating-linear-gradient(to bottom,#000 0 1px,transparent 1px 2px)"></div>
<div style="left:23px;top:574px;width:1316px;height:1px;background:repeating-linear-gradient(to right,#000 0 1px,transparent 1px 2px)"></div>
<div style="left:1340px;top:574px;width:4px;height:1px;background:#d4d4d4"></div>
<div style="left:458px;top:552px;width:1px;height:22px;background:repeating-linear-gradient(to bottom,#000 0 1px,transparent 1px 2px)"></div>
<div style="left:556px;top:552px;width:1px;height:22px;background:repeating-linear-gradient(to bottom,#000 0 1px,transparent 1px 2px)"></div>
<div style="left:607px;top:552px;width:1px;height:22px;background:repeating-linear-gradient(to bottom,#000 0 1px,transparent 1px 2px)"></div>
<div style="left:701px;top:552px;width:1px;height:22px;background:repeating-linear-gradient(to bottom,#000 0 1px,transparent 1px 2px)"></div>
<div style="left:757px;top:552px;width:1px;height:22px;background:repeating-linear-gradient(to bottom,#000 0 1px,transparent 1px 2px)"></div>
<div style="left:812px;top:552px;width:1px;height:22px;background:repeating-linear-gradient(to bottom,#000 0 1px,transparent 1px 2px)"></div>
<div style="left:872px;top:552px;width:1px;height:22px;background:repeating-linear-gradient(to bottom,#000 0 1px,transparent 1px 2px)"></div>
<div style="left:927px;top:552px;width:1px;height:22px;background:repeating-linear-gradient(to bottom,#000 0 1px,transparent 1px 2px)"></div>
<div style="left:983px;top:552px;width:1px;height:22px;background:repeating-linear-gradient(to bottom,#000 0 1px,transparent 1px 2px)"></div>
<div style="left:1039px;top:552px;width:1px;height:22px;background:repeating-linear-gradient(to bottom,#000 0 1px,transparent 1px 2px)"></div>
<div style="left:1095px;top:552px;width:1px;height:22px;background:repeating-linear-gradient(to bottom,#000 0 1px,transparent 1px 2px)"></div>
<div style="left:1151px;top:552px;width:1px;height:22px;background:repeating-linear-gradient(to bottom,#000 0 1px,transparent 1px 2px)"></div>
<div style="left:1207px;top:552px;width:1px;height:22px;background:repeating-linear-gradient(to bottom,#000 0 1px,transparent 1px 2px)"></div>
<div style="left:1273px;top:552px;width:1px;height:22px;background:repeating-linear-gradient(to bottom,#000 0 1px,transparent 1px 2px)"></div>
<div class="t" style="left:26.5px;top:555.76px;font:normal bold 17px/1 'Liberation Serif', serif;color:#000;">4. Theo dõi tiến độ giải quyết:</div>
<div style="left:23px;top:597px;width:1316px;height:1px;background:repeating-linear-gradient(to right,#000 0 1px,transparent 1px 2px)"></div>
<div style="left:1340px;top:597px;width:4px;height:1px;background:#d4d4d4"></div>
<div style="left:458px;top:575px;width:1px;height:22px;background:repeating-linear-gradient(to bottom,#000 0 1px,transparent 1px 2px)"></div>
<div style="left:556px;top:575px;width:1px;height:22px;background:repeating-linear-gradient(to bottom,#000 0 1px,transparent 1px 2px)"></div>
<div style="left:607px;top:575px;width:1px;height:22px;background:repeating-linear-gradient(to bottom,#000 0 1px,transparent 1px 2px)"></div>
<div style="left:701px;top:575px;width:1px;height:22px;background:repeating-linear-gradient(to bottom,#000 0 1px,transparent 1px 2px)"></div>
<div style="left:757px;top:575px;width:1px;height:22px;background:repeating-linear-gradient(to bottom,#000 0 1px,transparent 1px 2px)"></div>
<div style="left:812px;top:575px;width:1px;height:22px;background:repeating-linear-gradient(to bottom,#000 0 1px,transparent 1px 2px)"></div>
<div style="left:872px;top:575px;width:1px;height:22px;background:repeating-linear-gradient(to bottom,#000 0 1px,transparent 1px 2px)"></div>
<div style="left:927px;top:575px;width:1px;height:22px;background:repeating-linear-gradient(to bottom,#000 0 1px,transparent 1px 2px)"></div>
<div style="left:983px;top:575px;width:1px;height:22px;background:repeating-linear-gradient(to bottom,#000 0 1px,transparent 1px 2px)"></div>
<div style="left:1039px;top:575px;width:1px;height:22px;background:repeating-linear-gradient(to bottom,#000 0 1px,transparent 1px 2px)"></div>
<div style="left:1095px;top:575px;width:1px;height:22px;background:repeating-linear-gradient(to bottom,#000 0 1px,transparent 1px 2px)"></div>
<div style="left:1151px;top:575px;width:1px;height:22px;background:repeating-linear-gradient(to bottom,#000 0 1px,transparent 1px 2px)"></div>
<div style="left:1207px;top:575px;width:1px;height:22px;background:repeating-linear-gradient(to bottom,#000 0 1px,transparent 1px 2px)"></div>
<div style="left:1273px;top:575px;width:1px;height:22px;background:repeating-linear-gradient(to bottom,#000 0 1px,transparent 1px 2px)"></div>
<div class="t" style="left:35.0px;top:578.76px;font:normal normal 17px/1 'Liberation Serif', serif;color:#000;letter-spacing:-0.22px">- Số đã giải quyết trong hạn:</div>
<div style="left:541px;top:589px;width:6px;height:1px;background:#000"></div>
<div style="left:686px;top:589px;width:6px;height:1px;background:#000"></div>
<div style="left:742px;top:589px;width:6px;height:1px;background:#000"></div>
<div style="left:797px;top:589px;width:6px;height:1px;background:#000"></div>
<div style="left:857px;top:589px;width:6px;height:1px;background:#000"></div>
<div style="left:912px;top:589px;width:6px;height:1px;background:#000"></div>
<div style="left:968px;top:589px;width:6px;height:1px;background:#000"></div>
<div style="left:1024px;top:589px;width:6px;height:1px;background:#000"></div>
<div style="left:1080px;top:589px;width:6px;height:1px;background:#000"></div>
<div style="left:1136px;top:589px;width:6px;height:1px;background:#000"></div>
<div style="left:1192px;top:589px;width:6px;height:1px;background:#000"></div>
<div style="left:1258px;top:589px;width:6px;height:1px;background:#000"></div>
<div style="left:1324px;top:589px;width:6px;height:1px;background:#000"></div>
<div style="left:23px;top:620px;width:1316px;height:1px;background:repeating-linear-gradient(to right,#000 0 1px,transparent 1px 2px)"></div>
<div style="left:1340px;top:620px;width:4px;height:1px;background:#d4d4d4"></div>
<div style="left:163px;top:598px;width:1px;height:22px;background:repeating-linear-gradient(to bottom,#000 0 1px,transparent 1px 2px)"></div>
<div style="left:214px;top:598px;width:1px;height:22px;background:repeating-linear-gradient(to bottom,#000 0 1px,transparent 1px 2px)"></div>
<div style="left:458px;top:598px;width:1px;height:22px;background:repeating-linear-gradient(to bottom,#000 0 1px,transparent 1px 2px)"></div>
<div style="left:556px;top:598px;width:1px;height:22px;background:repeating-linear-gradient(to bottom,#000 0 1px,transparent 1px 2px)"></div>
<div style="left:607px;top:598px;width:1px;height:22px;background:repeating-linear-gradient(to bottom,#000 0 1px,transparent 1px 2px)"></div>
<div style="left:701px;top:598px;width:1px;height:22px;background:repeating-linear-gradient(to bottom,#000 0 1px,transparent 1px 2px)"></div>
<div style="left:757px;top:598px;width:1px;height:22px;background:repeating-linear-gradient(to bottom,#000 0 1px,transparent 1px 2px)"></div>
<div style="left:812px;top:598px;width:1px;height:22px;background:repeating-linear-gradient(to bottom,#000 0 1px,transparent 1px 2px)"></div>
<div style="left:872px;top:598px;width:1px;height:22px;background:repeating-linear-gradient(to bottom,#000 0 1px,transparent 1px 2px)"></div>
<div style="left:927px;top:598px;width:1px;height:22px;background:repeating-linear-gradient(to bottom,#000 0 1px,transparent 1px 2px)"></div>
<div style="left:983px;top:598px;width:1px;height:22px;background:repeating-linear-gradient(to bottom,#000 0 1px,transparent 1px 2px)"></div>
<div style="left:1039px;top:598px;width:1px;height:22px;background:repeating-linear-gradient(to bottom,#000 0 1px,transparent 1px 2px)"></div>
<div style="left:1095px;top:598px;width:1px;height:22px;background:repeating-linear-gradient(to bottom,#000 0 1px,transparent 1px 2px)"></div>
<div style="left:1151px;top:598px;width:1px;height:22px;background:repeating-linear-gradient(to bottom,#000 0 1px,transparent 1px 2px)"></div>
<div style="left:1207px;top:598px;width:1px;height:22px;background:repeating-linear-gradient(to bottom,#000 0 1px,transparent 1px 2px)"></div>
<div style="left:1273px;top:598px;width:1px;height:22px;background:repeating-linear-gradient(to bottom,#000 0 1px,transparent 1px 2px)"></div>
<div class="t" style="left:39px;top:601.76px;font:normal normal 17px/1 'Liberation Serif', serif;color:#000;letter-spacing:-0.22px">+Trong đó:</div>
<div style="left:23px;top:643px;width:1316px;height:1px;background:repeating-linear-gradient(to right,#000 0 1px,transparent 1px 2px)"></div>
<div style="left:1340px;top:643px;width:4px;height:1px;background:#d4d4d4"></div>
<div style="left:73px;top:621px;width:1px;height:22px;background:repeating-linear-gradient(to bottom,#000 0 1px,transparent 1px 2px)"></div>
<div style="left:214px;top:621px;width:1px;height:22px;background:repeating-linear-gradient(to bottom,#000 0 1px,transparent 1px 2px)"></div>
<div style="left:458px;top:621px;width:1px;height:22px;background:repeating-linear-gradient(to bottom,#000 0 1px,transparent 1px 2px)"></div>
<div style="left:556px;top:621px;width:1px;height:22px;background:repeating-linear-gradient(to bottom,#000 0 1px,transparent 1px 2px)"></div>
<div style="left:607px;top:621px;width:1px;height:22px;background:repeating-linear-gradient(to bottom,#000 0 1px,transparent 1px 2px)"></div>
<div style="left:701px;top:621px;width:1px;height:22px;background:repeating-linear-gradient(to bottom,#000 0 1px,transparent 1px 2px)"></div>
<div style="left:757px;top:621px;width:1px;height:22px;background:repeating-linear-gradient(to bottom,#000 0 1px,transparent 1px 2px)"></div>
<div style="left:812px;top:621px;width:1px;height:22px;background:repeating-linear-gradient(to bottom,#000 0 1px,transparent 1px 2px)"></div>
<div style="left:872px;top:621px;width:1px;height:22px;background:repeating-linear-gradient(to bottom,#000 0 1px,transparent 1px 2px)"></div>
<div style="left:927px;top:621px;width:1px;height:22px;background:repeating-linear-gradient(to bottom,#000 0 1px,transparent 1px 2px)"></div>
<div style="left:983px;top:621px;width:1px;height:22px;background:repeating-linear-gradient(to bottom,#000 0 1px,transparent 1px 2px)"></div>
<div style="left:1039px;top:621px;width:1px;height:22px;background:repeating-linear-gradient(to bottom,#000 0 1px,transparent 1px 2px)"></div>
<div style="left:1095px;top:621px;width:1px;height:22px;background:repeating-linear-gradient(to bottom,#000 0 1px,transparent 1px 2px)"></div>
<div style="left:1151px;top:621px;width:1px;height:22px;background:repeating-linear-gradient(to bottom,#000 0 1px,transparent 1px 2px)"></div>
<div style="left:1207px;top:621px;width:1px;height:22px;background:repeating-linear-gradient(to bottom,#000 0 1px,transparent 1px 2px)"></div>
<div style="left:1273px;top:621px;width:1px;height:22px;background:repeating-linear-gradient(to bottom,#000 0 1px,transparent 1px 2px)"></div>
<div class="t" style="left:77.4px;top:624.76px;font:normal normal 17px/1 'Liberation Serif', serif;color:#000;letter-spacing:-0.22px">Số phải gia hạn:</div>
<div style="left:541px;top:635px;width:6px;height:1px;background:#000"></div>
<div style="left:686px;top:635px;width:6px;height:1px;background:#000"></div>
<div style="left:742px;top:635px;width:6px;height:1px;background:#000"></div>
<div style="left:797px;top:635px;width:6px;height:1px;background:#000"></div>
<div style="left:857px;top:635px;width:6px;height:1px;background:#000"></div>
<div style="left:912px;top:635px;width:6px;height:1px;background:#000"></div>
<div style="left:968px;top:635px;width:6px;height:1px;background:#000"></div>
<div style="left:1024px;top:635px;width:6px;height:1px;background:#000"></div>
<div style="left:1080px;top:635px;width:6px;height:1px;background:#000"></div>
<div style="left:1136px;top:635px;width:6px;height:1px;background:#000"></div>
<div style="left:1192px;top:635px;width:6px;height:1px;background:#000"></div>
<div style="left:1258px;top:635px;width:6px;height:1px;background:#000"></div>
<div style="left:1324px;top:635px;width:6px;height:1px;background:#000"></div>
<div style="left:23px;top:666px;width:1316px;height:1px;background:repeating-linear-gradient(to right,#000 0 1px,transparent 1px 2px)"></div>
<div style="left:1340px;top:666px;width:4px;height:1px;background:#d4d4d4"></div>
<div style="left:214px;top:644px;width:1px;height:22px;background:repeating-linear-gradient(to bottom,#000 0 1px,transparent 1px 2px)"></div>
<div style="left:458px;top:644px;width:1px;height:22px;background:repeating-linear-gradient(to bottom,#000 0 1px,transparent 1px 2px)"></div>
<div style="left:556px;top:644px;width:1px;height:22px;background:repeating-linear-gradient(to bottom,#000 0 1px,transparent 1px 2px)"></div>
<div style="left:607px;top:644px;width:1px;height:22px;background:repeating-linear-gradient(to bottom,#000 0 1px,transparent 1px 2px)"></div>
<div style="left:701px;top:644px;width:1px;height:22px;background:repeating-linear-gradient(to bottom,#000 0 1px,transparent 1px 2px)"></div>
<div style="left:757px;top:644px;width:1px;height:22px;background:repeating-linear-gradient(to bottom,#000 0 1px,transparent 1px 2px)"></div>
<div style="left:812px;top:644px;width:1px;height:22px;background:repeating-linear-gradient(to bottom,#000 0 1px,transparent 1px 2px)"></div>
<div style="left:872px;top:644px;width:1px;height:22px;background:repeating-linear-gradient(to bottom,#000 0 1px,transparent 1px 2px)"></div>
<div style="left:927px;top:644px;width:1px;height:22px;background:repeating-linear-gradient(to bottom,#000 0 1px,transparent 1px 2px)"></div>
<div style="left:983px;top:644px;width:1px;height:22px;background:repeating-linear-gradient(to bottom,#000 0 1px,transparent 1px 2px)"></div>
<div style="left:1039px;top:644px;width:1px;height:22px;background:repeating-linear-gradient(to bottom,#000 0 1px,transparent 1px 2px)"></div>
<div style="left:1095px;top:644px;width:1px;height:22px;background:repeating-linear-gradient(to bottom,#000 0 1px,transparent 1px 2px)"></div>
<div style="left:1151px;top:644px;width:1px;height:22px;background:repeating-linear-gradient(to bottom,#000 0 1px,transparent 1px 2px)"></div>
<div style="left:1207px;top:644px;width:1px;height:22px;background:repeating-linear-gradient(to bottom,#000 0 1px,transparent 1px 2px)"></div>
<div style="left:1273px;top:644px;width:1px;height:22px;background:repeating-linear-gradient(to bottom,#000 0 1px,transparent 1px 2px)"></div>
<div class="t" style="left:35.0px;top:647.76px;font:normal normal 17px/1 'Liberation Serif', serif;color:#000;letter-spacing:-0.22px">- Số đã giải quyết quá hạn:</div>
<div style="left:541px;top:658px;width:6px;height:1px;background:#000"></div>
<div style="left:686px;top:658px;width:6px;height:1px;background:#000"></div>
<div style="left:742px;top:658px;width:6px;height:1px;background:#000"></div>
<div style="left:797px;top:658px;width:6px;height:1px;background:#000"></div>
<div style="left:857px;top:658px;width:6px;height:1px;background:#000"></div>
<div style="left:912px;top:658px;width:6px;height:1px;background:#000"></div>
<div style="left:968px;top:658px;width:6px;height:1px;background:#000"></div>
<div style="left:1024px;top:658px;width:6px;height:1px;background:#000"></div>
<div style="left:1080px;top:658px;width:6px;height:1px;background:#000"></div>
<div style="left:1136px;top:658px;width:6px;height:1px;background:#000"></div>
<div style="left:1192px;top:658px;width:6px;height:1px;background:#000"></div>
<div style="left:1258px;top:658px;width:6px;height:1px;background:#000"></div>
<div style="left:1324px;top:658px;width:6px;height:1px;background:#000"></div>
<div style="left:163px;top:667px;width:1px;height:11px;background:repeating-linear-gradient(to bottom,#000 0 1px,transparent 1px 2px)"></div>
<div style="left:214px;top:667px;width:1px;height:11px;background:repeating-linear-gradient(to bottom,#000 0 1px,transparent 1px 2px)"></div>
<div style="left:458px;top:667px;width:1px;height:11px;background:repeating-linear-gradient(to bottom,#000 0 1px,transparent 1px 2px)"></div>
<div style="left:556px;top:667px;width:1px;height:11px;background:repeating-linear-gradient(to bottom,#000 0 1px,transparent 1px 2px)"></div>
<div style="left:607px;top:667px;width:1px;height:11px;background:repeating-linear-gradient(to bottom,#000 0 1px,transparent 1px 2px)"></div>
<div style="left:701px;top:667px;width:1px;height:11px;background:repeating-linear-gradient(to bottom,#000 0 1px,transparent 1px 2px)"></div>
<div style="left:757px;top:667px;width:1px;height:11px;background:repeating-linear-gradient(to bottom,#000 0 1px,transparent 1px 2px)"></div>
<div style="left:812px;top:667px;width:1px;height:11px;background:repeating-linear-gradient(to bottom,#000 0 1px,transparent 1px 2px)"></div>
<div style="left:872px;top:667px;width:1px;height:11px;background:repeating-linear-gradient(to bottom,#000 0 1px,transparent 1px 2px)"></div>
<div style="left:927px;top:667px;width:1px;height:11px;background:repeating-linear-gradient(to bottom,#000 0 1px,transparent 1px 2px)"></div>
<div style="left:983px;top:667px;width:1px;height:11px;background:repeating-linear-gradient(to bottom,#000 0 1px,transparent 1px 2px)"></div>
<div style="left:1039px;top:667px;width:1px;height:11px;background:repeating-linear-gradient(to bottom,#000 0 1px,transparent 1px 2px)"></div>
<div style="left:1095px;top:667px;width:1px;height:11px;background:repeating-linear-gradient(to bottom,#000 0 1px,transparent 1px 2px)"></div>
<div style="left:1151px;top:667px;width:1px;height:11px;background:repeating-linear-gradient(to bottom,#000 0 1px,transparent 1px 2px)"></div>
<div style="left:1207px;top:667px;width:1px;height:11px;background:repeating-linear-gradient(to bottom,#000 0 1px,transparent 1px 2px)"></div>
<div style="left:1273px;top:667px;width:1px;height:11px;background:repeating-linear-gradient(to bottom,#000 0 1px,transparent 1px 2px)"></div>
<div class="t" style="left:35.0px;top:671.76px;font:normal normal 17px/1 'Liberation Serif', serif;color:#000;letter-spacing:-0.22px">- Số sắp hết hạn:</div>
<div style="left:541px;top:681px;width:6px;height:1px;background:#000"></div>
<div style="left:686px;top:681px;width:6px;height:1px;background:#000"></div>
<div style="left:742px;top:681px;width:6px;height:1px;background:#000"></div>
<div style="left:797px;top:681px;width:6px;height:1px;background:#000"></div>
<div style="left:857px;top:681px;width:6px;height:1px;background:#000"></div>
<div style="left:912px;top:681px;width:6px;height:1px;background:#000"></div>
<div style="left:968px;top:681px;width:6px;height:1px;background:#000"></div>
<div style="left:1024px;top:681px;width:6px;height:1px;background:#000"></div>
<div style="left:1080px;top:681px;width:6px;height:1px;background:#000"></div>
<div style="left:1136px;top:681px;width:6px;height:1px;background:#000"></div>
<div style="left:1192px;top:681px;width:6px;height:1px;background:#000"></div>
<div style="left:1258px;top:681px;width:6px;height:1px;background:#000"></div>
<div style="left:1324px;top:681px;width:6px;height:1px;background:#000"></div>
<div style="left:1339px;top:251px;width:1px;height:427px;background:#000"></div>
<div style="left:0px;top:679px;width:1345px;height:27px;background:#e6e6e6"></div>
<div style="left:0px;top:678px;width:1345px;height:1px;background:#a8a8a8"></div>
<svg style="left:26px;top:687px;" width="6" height="9" viewBox="0 0 6 9"><path d="M5 0v8L0 4z" fill="#c0c0c0"/></svg>
<svg style="left:55px;top:687px;" width="6" height="9" viewBox="0 0 6 9"><path d="M0 0v8l5-4z" fill="#c0c0c0"/></svg>
<div style="left:100px;top:682px;width:1px;height:20px;background:#a8a8a8"></div>
<div class="t" style="left:116.5px;top:685.00px;font:normal normal 13px/1 'Liberation Sans', sans-serif;color:#444;letter-spacing:-0.1px">Thụ lý tin báo</div>
<div style="left:211px;top:678px;width:117px;height:24px;background:#fff"></div>
<div style="left:211px;top:701px;width:117px;height:2px;background:#217346"></div>
<div style="left:211px;top:678px;width:1px;height:24px;background:#a8a8a8"></div>
<div style="left:327px;top:678px;width:1px;height:24px;background:#a8a8a8"></div>
<div class="t" style="left:223.5px;top:685.00px;font:normal bold 13px/1 'Liberation Sans', sans-serif;color:#217346;letter-spacing:-0.1px">Tổng hợp 2018</div>
<div class="t" style="left:339.5px;top:685.00px;font:normal normal 13px/1 'Liberation Sans', sans-serif;color:#444;">Tổng hợp 2019</div>
<div style="left:444px;top:682px;width:1px;height:20px;background:#a8a8a8"></div>
<div class="t" style="left:455.5px;top:685.00px;font:normal normal 13px/1 'Liberation Sans', sans-serif;color:#444;">Tổng hợp 2020</div>
<div style="left:559px;top:682px;width:1px;height:20px;background:#a8a8a8"></div>
<div class="t" style="left:572px;top:685.00px;font:normal normal 13px/1 'Liberation Sans', sans-serif;color:#444;">Tổng hợp 2021</div>
<div style="left:674px;top:682px;width:1px;height:20px;background:#a8a8a8"></div>
<svg style="left:707px;top:683px;" width="17" height="17" viewBox="0 0 17 17"><circle cx="8.5" cy="8.5" r="7" fill="none" stroke="#777" stroke-width="1.3"/><path d="M8.5 4.5v8M4.5 8.5h8" stroke="#777" stroke-width="1.5"/></svg>
<div style="left:819px;top:688px;width:2px;height:2px;background:#b0b0b0"></div>
<div style="left:819px;top:692px;width:2px;height:2px;background:#b0b0b0"></div>
<div style="left:819px;top:696px;width:2px;height:2px;background:#b0b0b0"></div>
<div style="left:836px;top:685px;width:495px;height:15px;background:#d6d6d6"></div>
<div style="left:836px;top:685px;width:15px;height:15px;background:#fff;border:1px solid #ababab;box-sizing:border-box"></div>
<svg style="left:840px;top:688px;" width="6" height="9" viewBox="0 0 6 9"><path d="M5 0v8L0 4z" fill="#777"/></svg>
<div style="left:851px;top:685px;width:386px;height:15px;background:#fff;border:1px solid #ababab;box-sizing:border-box"></div>
<div style="left:1330px;top:685px;width:15px;height:15px;background:#fff;border:1px solid #ababab;box-sizing:border-box"></div>
<svg style="left:1336px;top:688px;" width="6" height="9" viewBox="0 0 6 9"><path d="M0 0v8l5-4z" fill="#777"/></svg>
<div style="left:1345px;top:235px;width:21px;height:444px;background:#e6e6e6"></div>
<div style="left:1348px;top:251px;width:15px;height:427px;background:#d6d6d6"></div>
<div style="left:1348px;top:237px;width:15px;height:15px;background:#fff;border:1px solid #ababab;box-sizing:border-box"></div>
<svg style="left:1351px;top:242px;" width="9" height="5" viewBox="0 0 9 5"><path d="M0 4.5h9L4.5 0z" fill="#777"/></svg>
<div style="left:1348px;top:458px;width:15px;height:195px;background:#fff;border:1px solid #ababab;box-sizing:border-box"></div>
<div style="left:1348px;top:664px;width:15px;height:15px;background:#fff;border:1px solid #ababab;box-sizing:border-box"></div>
<svg style="left:1351px;top:669px;" width="9" height="5" viewBox="0 0 9 5"><path d="M0 0h9L4.5 4.5z" fill="#777"/></svg>
<div style="left:1345px;top:679px;width:21px;height:27px;background:#e6e6e6"></div>
<div style="left:0px;top:706px;width:1366px;height:1px;background:#c6c6c6"></div>
<div style="left:0px;top:707px;width:1366px;height:21px;background:#f0f0f0"></div>
<div style="left:0px;top:728px;width:1366px;height:1px;background:#2b2b2b"></div>
<div class="t" style="left:8px;top:711.69px;font:normal normal 11px/1 'Liberation Sans', sans-serif;color:#555;letter-spacing:-0.2px">Ready</div>
<div style="left:1074px;top:707px;width:38px;height:21px;background:#c6c6c6"></div>
<svg style="left:1086px;top:710px;" width="13" height="13" viewBox="0 0 13 13"><path d="M.5 .5h12v12H.5z" fill="none" stroke="#6a6a6a" stroke-width="1.2"/><path d="M4.5 .5v12M8.5 .5v12M.5 4.5h12M.5 8.5h12" stroke="#6a6a6a" stroke-width="1.2"/></svg>
<svg style="left:1124px;top:710px;" width="14" height="13" viewBox="0 0 14 13"><rect x=".6" y=".6" width="12.8" height="11.8" fill="none" stroke="#6a6a6a" stroke-width="1.2"/><rect x="3.5" y="2.5" width="7" height="8" fill="none" stroke="#6a6a6a" stroke-width="1"/><rect x="5" y="4" width="4" height="1" fill="#6a6a6a"/><rect x="5" y="6" width="4" height="1" fill="#6a6a6a"/><rect x="5" y="8" width="4" height="1" fill="#6a6a6a"/></svg>
<svg style="left:1162px;top:710px;" width="14" height="13" viewBox="0 0 14 13"><rect x=".6" y=".6" width="12.8" height="11.8" fill="none" stroke="#6a6a6a" stroke-width="1.2"/><path d="M3.5 .6v6.5h6v-6.5M6.5 .6v6.5" fill="none" stroke="#6a6a6a" stroke-width="1.1"/></svg>
<div style="left:1193px;top:715.5px;width:6px;height:2px;background:#555"></div>
<div style="left:1203px;top:716px;width:100px;height:1px;background:#a0a0a0"></div>
<div style="left:1247px;top:711px;width:4px;height:11px;background:#666"></div>
<div style="left:1253px;top:713px;width:1px;height:6px;background:#999"></div>
<svg style="left:1307px;top:713px;" width="8" height="8" viewBox="0 0 8 8"><path d="M4 0v8M0 4h8" stroke="#555" stroke-width="2"/></svg>
<div class="t" style="left:1329.5px;top:710.84px;font:normal normal 12px/1 'Liberation Sans', sans-serif;color:#444;">91%</div>
</body></html>
